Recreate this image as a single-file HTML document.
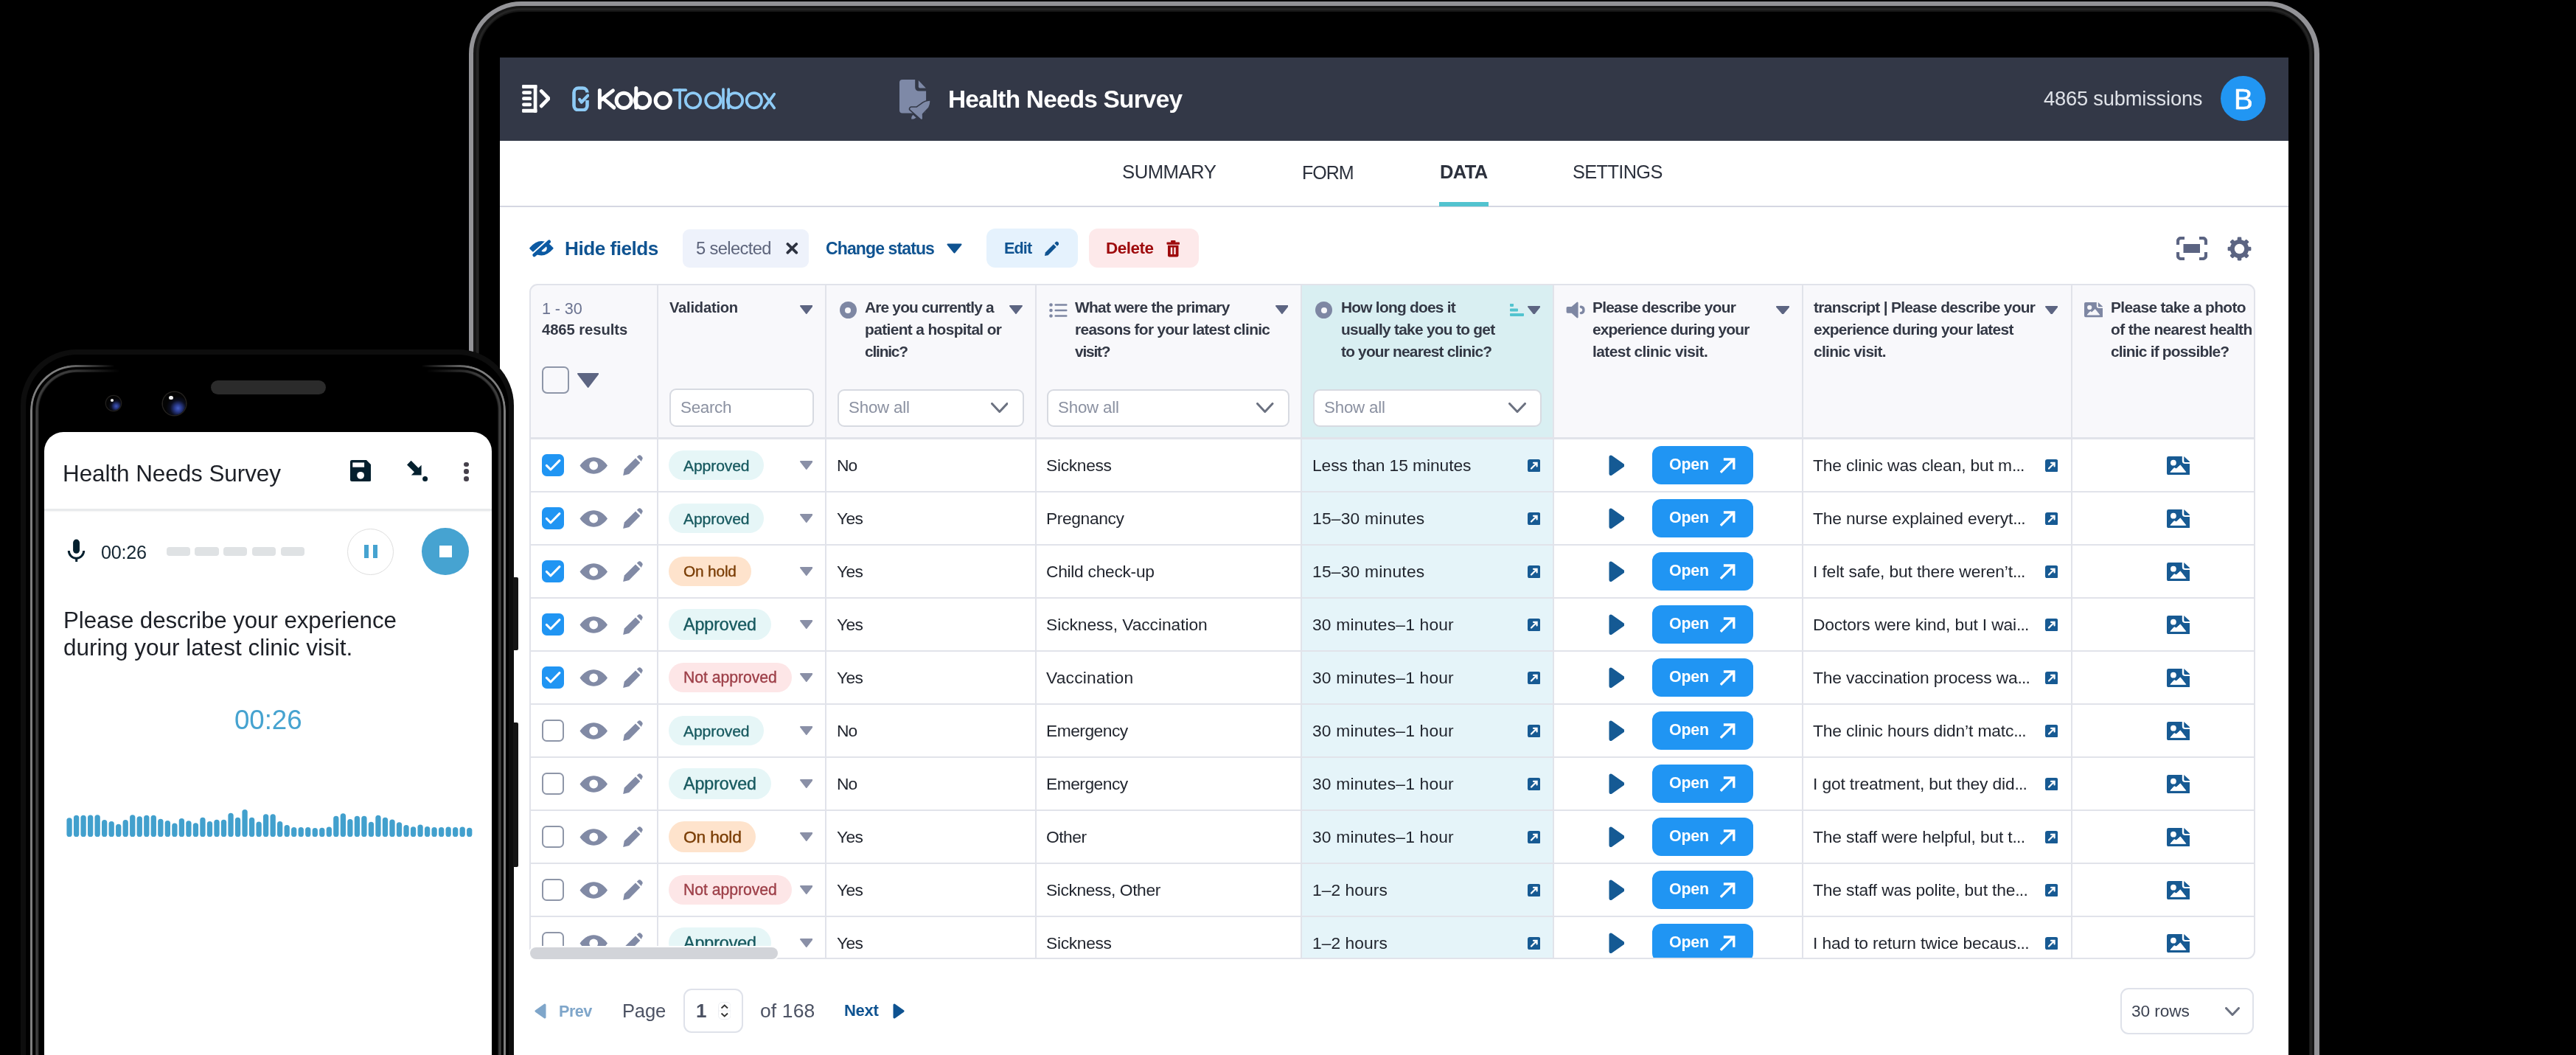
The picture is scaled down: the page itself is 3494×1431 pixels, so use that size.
<!DOCTYPE html><html><head><meta charset="utf-8"><style>html,body{margin:0;padding:0;width:3494px;height:1431px;overflow:hidden;background:#000;}body{position:relative;font-family:'Liberation Sans', sans-serif;} .t{will-change:transform;}</style></head><body><div style="position:absolute;left:635.8px;top:1.6px;width:2510px;height:1600px;border-radius:71px;background:#939397;"></div><div style="position:absolute;left:642.4px;top:8px;width:2496.8px;height:1600px;border-radius:64.5px;background:#161616;"></div><div style="position:absolute;left:645.5px;top:11px;width:2490.6px;height:1600px;border-radius:61.5px;border:3px solid #242424;box-sizing:border-box;"></div><div style="position:absolute;left:650px;top:15.5px;width:2481.6px;height:1600px;border-radius:57px;background:#000;"></div><div style="position:absolute;left:678.00px;top:77.50px;width:2425.50px;height:1353.50px;background:#fff;"></div><div style="position:absolute;left:678.00px;top:77.50px;width:2425.50px;height:113.00px;background:#333847;"></div><svg style="position:absolute;left:707.00px;top:114.00px;" width="39.00" height="39.00" viewBox="0 0 39 39" preserveAspectRatio="none"><g fill="#fff"><rect x="1.1" y="0.9" width="20.3" height="5" rx="1.2"/><rect x="16.7" y="0.9" width="4.7" height="37.8" rx="1"/><rect x="1.1" y="33.8" width="20.3" height="5" rx="1.2"/><rect x="1.1" y="9.2" width="13" height="4.8" rx="2.2"/><rect x="1.1" y="17.3" width="13" height="4.8" rx="2.2"/><rect x="1.1" y="25.4" width="13" height="4.8" rx="2.2"/></g><polyline points="27.3,9.6 37.2,19.7 27.3,29.8" fill="none" stroke="#fff" stroke-width="4.9" stroke-linecap="round" stroke-linejoin="miter"/></svg><svg style="position:absolute;left:776.00px;top:116.50px;" width="23.00" height="34.80" viewBox="0 0 23 34.8" preserveAspectRatio="none"><path d="M20.5 8.3 V8.5 A6 6 0 0 0 14.5 2.5 H8.5 A6 6 0 0 0 2.5 8.5 V26.3 A6 6 0 0 0 8.5 32.3 H14.5 A6 6 0 0 0 20.5 26.3 V19.1" fill="none" stroke="#8ecbf6" stroke-width="4.6"/><polyline points="10.2,17.9 12.6,21.7 21.3,12.6" fill="none" stroke="#8ecbf6" stroke-width="4.2" stroke-linecap="round" stroke-linejoin="round"/></svg><svg style="position:absolute;left:800.00px;top:105.00px;" width="260.00" height="55.00" viewBox="0 0 260 55" preserveAspectRatio="none"><g fill="none" stroke="#fff" stroke-width="5" stroke-linecap="round"><line x1="13.4" y1="17.4" x2="13.4" y2="41"/><line x1="15.6" y1="30.2" x2="31.4" y2="17.9"/><line x1="19.2" y1="29.3" x2="32.8" y2="41"/><circle cx="46.2" cy="31.3" r="10.1"/><line x1="62.8" y1="14.6" x2="62.8" y2="41"/><circle cx="71.6" cy="31.3" r="10.1"/><circle cx="99.2" cy="31.3" r="10.1"/></g><g fill="none" stroke="#8ecbf6" stroke-width="3.7" stroke-linecap="round"><line x1="114" y1="17.2" x2="130.2" y2="17.2"/><line x1="122.1" y1="17.2" x2="122.1" y2="41.4"/><circle cx="140" cy="31.3" r="10.2"/><circle cx="167.3" cy="31.3" r="10.2"/><line x1="181" y1="16" x2="181" y2="41.4"/><line x1="188.2" y1="16" x2="188.2" y2="41.4"/><circle cx="197" cy="31.3" r="10.2"/><circle cx="222.8" cy="31.3" r="10.2"/><line x1="236.5" y1="22.6" x2="250.2" y2="41.4"/><line x1="250.2" y1="22.6" x2="236.5" y2="41.4"/></g></svg><svg style="position:absolute;left:1210.00px;top:100.00px;" width="60.00" height="70.00" viewBox="0 0 60 70" preserveAspectRatio="none"><path d="M14 8 H31.2 V18.6 A5 5 0 0 0 36.2 23.6 H46.1 V49.4 A4 4 0 0 1 42.1 53.4 H14 A4 4 0 0 1 10 49.4 V12 A4 4 0 0 1 14 8Z" fill="#7e89a7"/><path d="M35.8 9 L45.8 19.6 H37.8 A2 2 0 0 1 35.8 17.6Z" fill="#7e89a7"/><path d="M51.3 36.8 C47 37 43 38.5 39.5 41.5 L33.5 45.8 H26.5 A2 2 0 0 0 24.3 48.3 L39.5 61.8 A1.2 1.2 0 0 0 41 60.8 L40.8 54.4 L49.1 45.8 C50.5 43 51.3 40 51.3 36.8Z" fill="#7e89a7" stroke="#333847" stroke-width="3.2" stroke-linejoin="round" paint-order="stroke"/><path d="M26.2 61.5 C26 59.5 26.5 57.5 28.3 55.7 L32.6 59.5 C31 61 28.8 61.8 26.2 61.5Z" fill="#7e89a7"/></svg><div class="t" style="position:absolute;left:1286.00px;top:117.75px;font-size:33.38px;line-height:33.38px;font-weight:700;color:#ffffff;white-space:nowrap;letter-spacing:-0.781px;">Health Needs Survey</div><div class="t" style="position:absolute;left:2771.50px;top:120.48px;font-size:27.31px;line-height:27.31px;font-weight:400;color:#dfe2e8;white-space:nowrap;letter-spacing:-0.199px;">4865 submissions</div><div style="position:absolute;left:3012px;top:103.2px;width:61px;height:61px;border-radius:50%;background:#2196f3;"></div><div class="t" style="position:absolute;left:3029.50px;top:115.80px;font-size:38.62px;line-height:38.62px;font-weight:400;color:#ffffff;white-space:nowrap;-webkit-text-stroke:0.6px #fff;">B</div><div class="t" style="position:absolute;left:1521.70px;top:220.87px;font-size:25.78px;line-height:25.78px;font-weight:400;color:#2c313d;white-space:nowrap;letter-spacing:-0.556px;">SUMMARY</div><div class="t" style="position:absolute;left:1765.50px;top:221.52px;font-size:25.02px;line-height:25.02px;font-weight:400;color:#2c313d;white-space:nowrap;letter-spacing:-1.048px;">FORM</div><div class="t" style="position:absolute;left:1952.80px;top:221.06px;font-size:25.57px;line-height:25.57px;font-weight:700;color:#2c313d;white-space:nowrap;letter-spacing:-0.675px;">DATA</div><div class="t" style="position:absolute;left:2133.00px;top:221.24px;font-size:25.35px;line-height:25.35px;font-weight:400;color:#2c313d;white-space:nowrap;letter-spacing:-0.636px;">SETTINGS</div><div style="position:absolute;left:678.00px;top:279.20px;width:2425.50px;height:2.00px;background:#d5d7e2;"></div><div style="position:absolute;left:1952.00px;top:273.80px;width:67.00px;height:6.20px;background:#52c3cf;"></div><svg style="position:absolute;left:712.00px;top:318.00px;" width="45.00" height="36.00" viewBox="0 0 45 36" preserveAspectRatio="none"><path d="M7.3 18.8 Q22.4 1.6 37.5 18.8 Q22.4 36 7.3 18.8Z" fill="#0c5aa3" stroke="#0c5aa3" stroke-width="2.2" stroke-linejoin="round"/><circle cx="25.2" cy="19" r="4.6" fill="#fff"/><line x1="11.3" y1="26.8" x2="31.5" y2="8.5" stroke="#fff" stroke-width="5" stroke-linecap="round"/><line x1="12.6" y1="28" x2="32.8" y2="9.7" stroke="#0c5aa3" stroke-width="4.6" stroke-linecap="round"/><path d="M15 27 L22 21" stroke="#0c5aa3" stroke-width="3"/></svg><div class="t" style="position:absolute;left:765.80px;top:324.35px;font-size:26.16px;line-height:26.16px;font-weight:700;color:#0f5391;white-space:nowrap;letter-spacing:-0.500px;">Hide fields</div><div style="position:absolute;left:926.40px;top:311.20px;width:170.30px;height:51.40px;background:#eef2fb;border-radius:9px;"></div><div class="t" style="position:absolute;left:944.00px;top:325.63px;font-size:23.71px;line-height:23.71px;font-weight:400;color:#5d647b;white-space:nowrap;letter-spacing:-0.623px;">5 selected</div><svg style="position:absolute;left:1066.00px;top:329.00px;" width="17.00" height="16.00" viewBox="0 0 17 16" preserveAspectRatio="none"><path d="M2.4 2 L14.2 13.7 M14.2 2 L2.4 13.7" stroke="#2d3240" stroke-width="3.8" stroke-linecap="round"/></svg><div class="t" style="position:absolute;left:1120.40px;top:326.18px;font-size:23.06px;line-height:23.06px;font-weight:700;color:#0f5391;white-space:nowrap;letter-spacing:-0.909px;">Change status</div><svg style="position:absolute;left:1284.00px;top:330.00px;" width="21.00" height="14.00" viewBox="0 0 21 14" preserveAspectRatio="none"><path d="M1.5 1.5 H19.5 L10.5 12.5Z" fill="#0f5391" stroke="#0f5391" stroke-width="2" stroke-linejoin="round"/></svg><div style="position:absolute;left:1338.00px;top:310.20px;width:123.50px;height:52.80px;background:#e5f2fd;border-radius:12px;"></div><div class="t" style="position:absolute;left:1361.80px;top:326.46px;font-size:21.55px;line-height:21.55px;font-weight:700;color:#0f5391;white-space:nowrap;letter-spacing:-0.832px;">Edit</div><svg style="position:absolute;left:1416.00px;top:326.50px;" width="20.00" height="21.00" viewBox="0 0 20 21" preserveAspectRatio="none"><path d="M1 20 L1.8 15.5 L13 4.3 L16.7 8 L5.5 19.2 Z" fill="#0f5391"/><path d="M14.3 3 L16 1.3 A2 2 0 0 1 18.8 1.3 L19.7 2.2 A2 2 0 0 1 19.7 5 L18 6.7Z" fill="#0f5391"/></svg><div style="position:absolute;left:1476.70px;top:310.20px;width:149.80px;height:52.80px;background:#fde9ea;border-radius:12px;"></div><div class="t" style="position:absolute;left:1500.30px;top:325.68px;font-size:22.47px;line-height:22.47px;font-weight:700;color:#9e0a0c;white-space:nowrap;letter-spacing:-0.493px;">Delete</div><svg style="position:absolute;left:1581.50px;top:326.00px;" width="18.50" height="22.50" viewBox="0 0 18.5 22.5" preserveAspectRatio="none"><rect x="0.5" y="2.5" width="17.5" height="3.2" rx="0.8" fill="#9e0a0c"/><rect x="6" y="0" width="6.5" height="3" rx="1" fill="#9e0a0c"/><path d="M2 6.8 H16.5 V20.5 A2 2 0 0 1 14.5 22.5 H4 A2 2 0 0 1 2 20.5Z" fill="#9e0a0c"/><rect x="5.8" y="9.5" width="2.4" height="9.5" fill="#fde9ea"/><rect x="10.3" y="9.5" width="2.4" height="9.5" fill="#fde9ea"/></svg><svg style="position:absolute;left:2951.50px;top:321.00px;" width="42.00" height="32.00" viewBox="0 0 42 32" preserveAspectRatio="none"><path d="M11 2 H6 A4 4 0 0 0 2 6 V11 M31 2 H36 A4 4 0 0 1 40 6 V11 M40 21 V26 A4 4 0 0 1 36 30 H31 M11 30 H6 A4 4 0 0 1 2 26 V21" fill="none" stroke="#5b6482" stroke-width="4.2"/><rect x="9.5" y="10" width="22.5" height="12" fill="#5b6482"/></svg><svg style="position:absolute;left:3020.50px;top:320.50px;" width="33.00" height="33.00" viewBox="0 0 33 33" preserveAspectRatio="none"><g fill="#5b6482"><circle cx="16.5" cy="16.5" r="12.6"/><rect x="13.7" y="0.6" width="5.6" height="6" rx="1.3" transform="rotate(0 16.5 16.5)"/><rect x="13.7" y="0.6" width="5.6" height="6" rx="1.3" transform="rotate(45 16.5 16.5)"/><rect x="13.7" y="0.6" width="5.6" height="6" rx="1.3" transform="rotate(90 16.5 16.5)"/><rect x="13.7" y="0.6" width="5.6" height="6" rx="1.3" transform="rotate(135 16.5 16.5)"/><rect x="13.7" y="0.6" width="5.6" height="6" rx="1.3" transform="rotate(180 16.5 16.5)"/><rect x="13.7" y="0.6" width="5.6" height="6" rx="1.3" transform="rotate(225 16.5 16.5)"/><rect x="13.7" y="0.6" width="5.6" height="6" rx="1.3" transform="rotate(270 16.5 16.5)"/><rect x="13.7" y="0.6" width="5.6" height="6" rx="1.3" transform="rotate(315 16.5 16.5)"/></g><circle cx="16.5" cy="16.5" r="6.7" fill="#fdfdfe"/></svg><div style="position:absolute;left:719px;top:386px;width:2339px;height:913.5px;border-radius:10px;overflow:hidden;background:#fff;"><div style="position:absolute;left:0.00px;top:0.00px;width:2339.00px;height:209.00px;background:#f8f8fb;"></div><div style="position:absolute;left:1045.50px;top:0.00px;width:342.50px;height:209.00px;background:#d9eff2;"></div><div style="position:absolute;left:1045.50px;top:209.00px;width:342.50px;height:704.50px;background:#e5f4f9;"></div><div style="position:absolute;left:0.00px;top:280.30px;width:2339.00px;height:2.00px;background:#e1e3ea;"></div><div style="position:absolute;left:0.00px;top:352.30px;width:2339.00px;height:2.00px;background:#e1e3ea;"></div><div style="position:absolute;left:0.00px;top:424.30px;width:2339.00px;height:2.00px;background:#e1e3ea;"></div><div style="position:absolute;left:0.00px;top:496.30px;width:2339.00px;height:2.00px;background:#e1e3ea;"></div><div style="position:absolute;left:0.00px;top:568.30px;width:2339.00px;height:2.00px;background:#e1e3ea;"></div><div style="position:absolute;left:0.00px;top:640.30px;width:2339.00px;height:2.00px;background:#e1e3ea;"></div><div style="position:absolute;left:0.00px;top:712.30px;width:2339.00px;height:2.00px;background:#e1e3ea;"></div><div style="position:absolute;left:0.00px;top:784.30px;width:2339.00px;height:2.00px;background:#e1e3ea;"></div><div style="position:absolute;left:0.00px;top:856.30px;width:2339.00px;height:2.00px;background:#e1e3ea;"></div><div style="position:absolute;left:0.00px;top:207.20px;width:2339.00px;height:2.60px;background:#e1e3ea;"></div><div style="position:absolute;left:172.00px;top:0.00px;width:2.00px;height:913.50px;background:#e1e3ea;"></div><div style="position:absolute;left:400.00px;top:0.00px;width:2.00px;height:913.50px;background:#e1e3ea;"></div><div style="position:absolute;left:684.50px;top:0.00px;width:2.00px;height:913.50px;background:#e1e3ea;"></div><div style="position:absolute;left:1044.50px;top:0.00px;width:2.00px;height:913.50px;background:#e1e3ea;"></div><div style="position:absolute;left:1387.00px;top:0.00px;width:2.00px;height:913.50px;background:#e1e3ea;"></div><div style="position:absolute;left:1724.50px;top:0.00px;width:2.00px;height:913.50px;background:#e1e3ea;"></div><div style="position:absolute;left:2089.50px;top:0.00px;width:2.00px;height:913.50px;background:#e1e3ea;"></div></div><div style="position:absolute;left:718px;top:385px;width:2341px;height:915.5px;border-radius:11px;border:2px solid #e1e3ea;box-sizing:border-box;"></div><div class="t" style="position:absolute;left:735.00px;top:407.61px;font-size:21.60px;line-height:21.60px;font-weight:400;color:#6b7390;white-space:nowrap;letter-spacing:-0.110px;">1 - 30</div><div class="t" style="position:absolute;left:735.00px;top:437.37px;font-size:20.24px;line-height:20.24px;font-weight:700;color:#333845;white-space:nowrap;letter-spacing:-0.074px;">4865 results</div><div style="position:absolute;left:734.60px;top:496.80px;width:37.40px;height:37.10px;border:2.2px solid #8e96a8;border-radius:7px;box-sizing:border-box;"></div><svg style="position:absolute;left:782.50px;top:505.50px;" width="29.30" height="20.00" viewBox="0 0 29.30 20.00" preserveAspectRatio="none"><path d="M1 1 H28.30 L14.65 19.00Z" fill="#5d6582" stroke="#5d6582" stroke-width="2" stroke-linejoin="round"/></svg><div class="t" style="position:absolute;left:907.70px;top:407.32px;font-size:20.18px;line-height:20.18px;font-weight:700;color:#333845;white-space:nowrap;letter-spacing:-0.233px;">Validation</div><svg style="position:absolute;left:1084.60px;top:414.20px;" width="17.60" height="12.00" viewBox="0 0 17.60 12.00" preserveAspectRatio="none"><path d="M1 1 H16.60 L8.80 11.00Z" fill="#5d6582" stroke="#5d6582" stroke-width="2" stroke-linejoin="round"/></svg><div style="position:absolute;left:907.70px;top:527.00px;width:196.50px;height:52.20px;background:#fff;border:2px solid #d7dae1;border-radius:9px;box-sizing:border-box;"></div><div class="t" style="position:absolute;left:922.70px;top:542.38px;font-size:22.47px;line-height:22.47px;font-weight:400;color:#8b91a1;white-space:nowrap;letter-spacing:-0.338px;">Search</div><div style="position:absolute;left:1138.6px;top:409.4px;width:23px;height:23px;border-radius:50%;background:#7e87a3;"></div><div style="position:absolute;left:1146.1px;top:416.9px;width:8px;height:8px;border-radius:50%;background:#f7f7fa;"></div><div class="t" style="position:absolute;left:1173.20px;top:407.01px;font-size:20.90px;line-height:20.90px;font-weight:700;color:#333845;white-space:nowrap;letter-spacing:-0.823px;">Are you currently a</div><div class="t" style="position:absolute;left:1173.20px;top:437.01px;font-size:20.90px;line-height:20.90px;font-weight:700;color:#333845;white-space:nowrap;letter-spacing:-0.624px;">patient a hospital or</div><div class="t" style="position:absolute;left:1173.20px;top:467.01px;font-size:20.90px;line-height:20.90px;font-weight:700;color:#333845;white-space:nowrap;letter-spacing:-1.195px;">clinic?</div><svg style="position:absolute;left:1369.20px;top:414.40px;" width="18.00" height="12.00" viewBox="0 0 18.00 12.00" preserveAspectRatio="none"><path d="M1 1 H17.00 L9.00 11.00Z" fill="#5d6582" stroke="#5d6582" stroke-width="2" stroke-linejoin="round"/></svg><div style="position:absolute;left:1135.50px;top:527.50px;width:253.30px;height:51.50px;background:#fff;border:2px solid #d7dae1;border-radius:9px;box-sizing:border-box;"></div><div class="t" style="position:absolute;left:1150.80px;top:541.90px;font-size:22.32px;line-height:22.32px;font-weight:400;color:#8b91a1;white-space:nowrap;letter-spacing:-0.197px;">Show all</div><svg style="position:absolute;left:1343.50px;top:546.00px;" width="23.50" height="14.00" viewBox="0 0 23.50 14.00" preserveAspectRatio="none"><polyline points="1.5,1.5 11.75,12.50 22.00,1.5" fill="none" stroke="#6b7180" stroke-width="3" stroke-linecap="round" stroke-linejoin="round"/></svg><svg style="position:absolute;left:1422.50px;top:410.50px;" width="25.00" height="20.00" viewBox="0 0 25 20" preserveAspectRatio="none"><g fill="#7e87a3"><circle cx="2.5" cy="2.5" r="2.3"/><circle cx="2.5" cy="10" r="2.3"/><circle cx="2.5" cy="17.5" r="2.3"/><rect x="7.5" y="1.2" width="17" height="2.6" rx="1"/><rect x="7.5" y="8.7" width="17" height="2.6" rx="1"/><rect x="7.5" y="16.2" width="17" height="2.6" rx="1"/></g></svg><div class="t" style="position:absolute;left:1458.00px;top:407.01px;font-size:20.90px;line-height:20.90px;font-weight:700;color:#333845;white-space:nowrap;letter-spacing:-0.683px;">What were the primary</div><div class="t" style="position:absolute;left:1458.00px;top:437.01px;font-size:20.90px;line-height:20.90px;font-weight:700;color:#333845;white-space:nowrap;letter-spacing:-0.671px;">reasons for your latest clinic</div><div class="t" style="position:absolute;left:1458.00px;top:467.01px;font-size:20.90px;line-height:20.90px;font-weight:700;color:#333845;white-space:nowrap;letter-spacing:-1.196px;">visit?</div><svg style="position:absolute;left:1729.60px;top:414.40px;" width="17.80" height="12.00" viewBox="0 0 17.80 12.00" preserveAspectRatio="none"><path d="M1 1 H16.80 L8.90 11.00Z" fill="#5d6582" stroke="#5d6582" stroke-width="2" stroke-linejoin="round"/></svg><div style="position:absolute;left:1420.30px;top:527.50px;width:329.00px;height:51.50px;background:#fff;border:2px solid #d7dae1;border-radius:9px;box-sizing:border-box;"></div><div class="t" style="position:absolute;left:1435.00px;top:541.90px;font-size:22.32px;line-height:22.32px;font-weight:400;color:#8b91a1;white-space:nowrap;letter-spacing:-0.197px;">Show all</div><svg style="position:absolute;left:1704.00px;top:546.00px;" width="23.50" height="14.00" viewBox="0 0 23.50 14.00" preserveAspectRatio="none"><polyline points="1.5,1.5 11.75,12.50 22.00,1.5" fill="none" stroke="#6b7180" stroke-width="3" stroke-linecap="round" stroke-linejoin="round"/></svg><div style="position:absolute;left:1784px;top:409.3px;width:23px;height:23px;border-radius:50%;background:#7e87a3;"></div><div style="position:absolute;left:1791.5px;top:416.8px;width:8px;height:8px;border-radius:50%;background:#f7f7fa;"></div><div class="t" style="position:absolute;left:1818.75px;top:407.01px;font-size:20.90px;line-height:20.90px;font-weight:700;color:#333845;white-space:nowrap;letter-spacing:-0.762px;">How long does it</div><div class="t" style="position:absolute;left:1818.75px;top:437.01px;font-size:20.90px;line-height:20.90px;font-weight:700;color:#333845;white-space:nowrap;letter-spacing:-0.728px;">usually take you to get</div><div class="t" style="position:absolute;left:1818.75px;top:467.01px;font-size:20.90px;line-height:20.90px;font-weight:700;color:#333845;white-space:nowrap;letter-spacing:-0.814px;">to your nearest clinic?</div><svg style="position:absolute;left:2047.50px;top:412.00px;" width="20.00" height="17.50" viewBox="0 0 20 17.5" preserveAspectRatio="none"><g fill="#52c4cf"><rect x="0" y="-0.1" width="5" height="4" rx="0.8"/><rect x="0" y="6.4" width="11" height="4" rx="0.8"/><rect x="0" y="12.9" width="19" height="4" rx="0.8"/></g></svg><svg style="position:absolute;left:2071.80px;top:414.60px;" width="17.40" height="11.60" viewBox="0 0 17.40 11.60" preserveAspectRatio="none"><path d="M1 1 H16.40 L8.70 10.60Z" fill="#5d6582" stroke="#5d6582" stroke-width="2" stroke-linejoin="round"/></svg><div style="position:absolute;left:1781.25px;top:527.60px;width:309.75px;height:51.40px;background:#fff;border:2px solid #d7dae1;border-radius:9px;box-sizing:border-box;"></div><div class="t" style="position:absolute;left:1796.00px;top:541.90px;font-size:22.32px;line-height:22.32px;font-weight:400;color:#8b91a1;white-space:nowrap;letter-spacing:-0.197px;">Show all</div><svg style="position:absolute;left:2045.50px;top:546.00px;" width="24.00" height="14.00" viewBox="0 0 24.00 14.00" preserveAspectRatio="none"><polyline points="1.5,1.5 12.00,12.50 22.50,1.5" fill="none" stroke="#6b7180" stroke-width="3" stroke-linecap="round" stroke-linejoin="round"/></svg><svg style="position:absolute;left:2123.50px;top:409.00px;" width="27.50" height="23.00" viewBox="0 0 27.5 23" preserveAspectRatio="none"><path d="M2.2 7 H7.6 L14.6 0.9 A1.2 1.2 0 0 1 16.6 1.8 V21.2 A1.2 1.2 0 0 1 14.6 22.1 L7.6 15.7 H2.2 A1.6 1.6 0 0 1 0.6 14.1 V8.6 A1.6 1.6 0 0 1 2.2 7Z" fill="#7e87a3"/><path d="M20.4 7.3 A4.2 4.2 0 0 1 20.4 15.6" fill="none" stroke="#7e87a3" stroke-width="3.4" stroke-linecap="round"/></svg><div class="t" style="position:absolute;left:2160.30px;top:407.01px;font-size:20.90px;line-height:20.90px;font-weight:700;color:#333845;white-space:nowrap;letter-spacing:-0.749px;">Please describe your</div><div class="t" style="position:absolute;left:2160.30px;top:437.01px;font-size:20.90px;line-height:20.90px;font-weight:700;color:#333845;white-space:nowrap;letter-spacing:-0.844px;">experience during your</div><div class="t" style="position:absolute;left:2160.30px;top:467.01px;font-size:20.90px;line-height:20.90px;font-weight:700;color:#333845;white-space:nowrap;letter-spacing:-0.548px;">latest clinic visit.</div><svg style="position:absolute;left:2408.80px;top:414.60px;" width="18.40" height="11.60" viewBox="0 0 18.40 11.60" preserveAspectRatio="none"><path d="M1 1 H17.40 L9.20 10.60Z" fill="#5d6582" stroke="#5d6582" stroke-width="2" stroke-linejoin="round"/></svg><div class="t" style="position:absolute;left:2460.40px;top:407.01px;font-size:20.90px;line-height:20.90px;font-weight:700;color:#333845;white-space:nowrap;letter-spacing:-0.682px;">transcript | Please describe your</div><div class="t" style="position:absolute;left:2460.40px;top:437.01px;font-size:20.90px;line-height:20.90px;font-weight:700;color:#333845;white-space:nowrap;letter-spacing:-0.715px;">experience during your latest</div><div class="t" style="position:absolute;left:2460.40px;top:467.01px;font-size:20.90px;line-height:20.90px;font-weight:700;color:#333845;white-space:nowrap;letter-spacing:-0.694px;">clinic visit.</div><svg style="position:absolute;left:2773.80px;top:414.60px;" width="17.40" height="11.60" viewBox="0 0 17.40 11.60" preserveAspectRatio="none"><path d="M1 1 H16.40 L8.70 10.60Z" fill="#5d6582" stroke="#5d6582" stroke-width="2" stroke-linejoin="round"/></svg><svg style="position:absolute;left:2826.80px;top:410.40px;" width="25.60" height="20.30" viewBox="0 0 32 25.5" preserveAspectRatio="none"><path d="M2.5 0 H21 V6 A4 4 0 0 0 25 10 H32 V23 A2.5 2.5 0 0 1 29.5 25.5 H2.5 A2.5 2.5 0 0 1 0 23 V2.5 A2.5 2.5 0 0 1 2.5 0Z" fill="#7e87a3"/><path d="M23.5 0 L32 8 H25 A1.5 1.5 0 0 1 23.5 6.5Z" fill="#7e87a3"/><circle cx="9" cy="8.8" r="3.9" fill="#f7f7fa"/><path d="M5 21.5 L10 15.8 L13 17 L18.5 12 L26 21.5Z" fill="#f7f7fa" stroke="#f7f7fa" stroke-width="1" stroke-linejoin="round"/></svg><div class="t" style="position:absolute;left:2863.00px;top:407.01px;font-size:20.90px;line-height:20.90px;font-weight:700;color:#333845;white-space:nowrap;letter-spacing:-0.642px;">Please take a photo</div><div class="t" style="position:absolute;left:2863.00px;top:437.01px;font-size:20.90px;line-height:20.90px;font-weight:700;color:#333845;white-space:nowrap;letter-spacing:-0.606px;">of the nearest health</div><div class="t" style="position:absolute;left:2863.00px;top:467.01px;font-size:20.90px;line-height:20.90px;font-weight:700;color:#333845;white-space:nowrap;letter-spacing:-0.794px;">clinic if possible?</div><div style="position:absolute;left:0;top:0;width:3494px;height:1298.5px;overflow:hidden;"><div style="position:absolute;left:734.60px;top:616.30px;width:30.20px;height:30.00px;background:#2095f3;border-radius:6.5px;"></div><svg style="position:absolute;left:734.60px;top:616.30px;" width="30.20" height="30.00" viewBox="0 0 30 30" preserveAspectRatio="none"><polyline points="6.3,15.4 11.8,21 23.8,8.6" fill="none" stroke="#fff" stroke-width="3" stroke-linecap="round" stroke-linejoin="round"/></svg><svg style="position:absolute;left:785.50px;top:619.80px;" width="38.50" height="23.00" viewBox="0 0 38.5 23" preserveAspectRatio="none"><path d="M0.5 11.5 C6 4 12.5 0.3 19.25 0.3 C26 0.3 32.5 4 38 11.5 C32.5 19 26 22.7 19.25 22.7 C12.5 22.7 6 19 0.5 11.5Z" fill="#818aa5"/><circle cx="19.2" cy="11.5" r="5.9" fill="#fff"/></svg><svg style="position:absolute;left:845.00px;top:616.80px;" width="27.50" height="29.00" viewBox="0 0 27.5 29" preserveAspectRatio="none"><path d="M0.2 28 L1.8 19.6 L17 4.5 L23.3 10.8 L8.2 26 Z" fill="#818aa5"/><path d="M18.8 2.8 L20.2 1.4 A3.3 3.3 0 0 1 24.8 1.4 L25.6 2.2 A3.3 3.3 0 0 1 25.6 6.8 L25 9.1Z" fill="#818aa5"/></svg><div style="position:absolute;left:907.00px;top:611.30px;width:129.00px;height:40.00px;background:#e6f6f7;border-radius:20px;"></div><div class="t" style="position:absolute;left:926.90px;top:620.70px;font-size:21.14px;line-height:21.14px;font-weight:400;color:#17595f;white-space:nowrap;letter-spacing:-0.117px;-webkit-text-stroke:0.35px #17595f;">Approved</div><svg style="position:absolute;left:1084.60px;top:625.30px;" width="17.60" height="12.00" viewBox="0 0 17.60 12.00" preserveAspectRatio="none"><path d="M1 1 H16.60 L8.80 11.00Z" fill="#8a90a7" stroke="#8a90a7" stroke-width="2" stroke-linejoin="round"/></svg><div class="t" style="position:absolute;left:1134.50px;top:620.20px;font-size:22.80px;line-height:22.80px;font-weight:400;color:#22262f;white-space:nowrap;letter-spacing:-1.023px;">No</div><div class="t" style="position:absolute;left:1419.30px;top:620.20px;font-size:22.80px;line-height:22.80px;font-weight:400;color:#22262f;white-space:nowrap;letter-spacing:-0.319px;">Sickness</div><div class="t" style="position:absolute;left:1780.25px;top:620.20px;font-size:22.80px;line-height:22.80px;font-weight:400;color:#22262f;white-space:nowrap;letter-spacing:-0.064px;">Less than 15 minutes</div><svg style="position:absolute;left:2072.00px;top:622.60px;" width="17.40" height="17.40" viewBox="0 0 17.4 17.4" preserveAspectRatio="none"><rect x="0" y="0" width="17.4" height="17.4" rx="3" fill="#175a93"/><path d="M5 12.5 L11.5 6 M8 4.8 H12.6 V9.4" fill="none" stroke="#fff" stroke-width="2.2" stroke-linecap="round"/></svg><svg style="position:absolute;left:2181.50px;top:616.80px;" width="21.50" height="28.50" viewBox="0 0 21.5 28.5" preserveAspectRatio="none"><path d="M3 3 L19 14.25 L3 25.5Z" fill="#155a94" stroke="#155a94" stroke-width="5" stroke-linejoin="round"/></svg><div style="position:absolute;left:2241.30px;top:605.00px;width:137.00px;height:52.40px;background:#2095f3;border-radius:12px;"></div><div class="t" style="position:absolute;left:2263.60px;top:620.46px;font-size:21.43px;line-height:21.43px;font-weight:700;color:#ffffff;white-space:nowrap;letter-spacing:-0.261px;">Open</div><svg style="position:absolute;left:2332.50px;top:621.00px;" width="21.00" height="20.60" viewBox="0 0 21 20.6" preserveAspectRatio="none"><path d="M2 18.6 L18 2.6 M6.5 2 H18.8 V14.2" fill="none" stroke="#fff" stroke-width="3.3" stroke-linecap="square"/></svg><div class="t" style="position:absolute;left:2459.40px;top:620.20px;font-size:22.80px;line-height:22.80px;font-weight:400;color:#22262f;white-space:nowrap;letter-spacing:-0.141px;">The clinic was clean, but m<span style="letter-spacing:-0.8px">...</span></div><svg style="position:absolute;left:2773.70px;top:622.60px;" width="17.40" height="17.40" viewBox="0 0 17.4 17.4" preserveAspectRatio="none"><rect x="0" y="0" width="17.4" height="17.4" rx="3" fill="#175a93"/><path d="M5 12.5 L11.5 6 M8 4.8 H12.6 V9.4" fill="none" stroke="#fff" stroke-width="2.2" stroke-linecap="round"/></svg><svg style="position:absolute;left:2938.70px;top:618.50px;" width="31.70" height="25.30" viewBox="0 0 32 25.5" preserveAspectRatio="none"><path d="M2.5 0 H21 V6 A4 4 0 0 0 25 10 H32 V23 A2.5 2.5 0 0 1 29.5 25.5 H2.5 A2.5 2.5 0 0 1 0 23 V2.5 A2.5 2.5 0 0 1 2.5 0Z" fill="#175a93"/><path d="M23.5 0 L32 8 H25 A1.5 1.5 0 0 1 23.5 6.5Z" fill="#175a93"/><circle cx="9" cy="8.8" r="3.9" fill="#ffffff"/><path d="M5 21.5 L10 15.8 L13 17 L18.5 12 L26 21.5Z" fill="#ffffff" stroke="#ffffff" stroke-width="1" stroke-linejoin="round"/></svg><div style="position:absolute;left:734.60px;top:688.30px;width:30.20px;height:30.00px;background:#2095f3;border-radius:6.5px;"></div><svg style="position:absolute;left:734.60px;top:688.30px;" width="30.20" height="30.00" viewBox="0 0 30 30" preserveAspectRatio="none"><polyline points="6.3,15.4 11.8,21 23.8,8.6" fill="none" stroke="#fff" stroke-width="3" stroke-linecap="round" stroke-linejoin="round"/></svg><svg style="position:absolute;left:785.50px;top:691.80px;" width="38.50" height="23.00" viewBox="0 0 38.5 23" preserveAspectRatio="none"><path d="M0.5 11.5 C6 4 12.5 0.3 19.25 0.3 C26 0.3 32.5 4 38 11.5 C32.5 19 26 22.7 19.25 22.7 C12.5 22.7 6 19 0.5 11.5Z" fill="#818aa5"/><circle cx="19.2" cy="11.5" r="5.9" fill="#fff"/></svg><svg style="position:absolute;left:845.00px;top:688.80px;" width="27.50" height="29.00" viewBox="0 0 27.5 29" preserveAspectRatio="none"><path d="M0.2 28 L1.8 19.6 L17 4.5 L23.3 10.8 L8.2 26 Z" fill="#818aa5"/><path d="M18.8 2.8 L20.2 1.4 A3.3 3.3 0 0 1 24.8 1.4 L25.6 2.2 A3.3 3.3 0 0 1 25.6 6.8 L25 9.1Z" fill="#818aa5"/></svg><div style="position:absolute;left:907.00px;top:683.30px;width:129.00px;height:40.00px;background:#e6f6f7;border-radius:20px;"></div><div class="t" style="position:absolute;left:926.90px;top:692.70px;font-size:21.14px;line-height:21.14px;font-weight:400;color:#17595f;white-space:nowrap;letter-spacing:-0.117px;-webkit-text-stroke:0.35px #17595f;">Approved</div><svg style="position:absolute;left:1084.60px;top:697.30px;" width="17.60" height="12.00" viewBox="0 0 17.60 12.00" preserveAspectRatio="none"><path d="M1 1 H16.60 L8.80 11.00Z" fill="#8a90a7" stroke="#8a90a7" stroke-width="2" stroke-linejoin="round"/></svg><div class="t" style="position:absolute;left:1134.50px;top:692.20px;font-size:22.80px;line-height:22.80px;font-weight:400;color:#22262f;white-space:nowrap;letter-spacing:-0.653px;">Yes</div><div class="t" style="position:absolute;left:1419.30px;top:692.20px;font-size:22.80px;line-height:22.80px;font-weight:400;color:#22262f;white-space:nowrap;letter-spacing:-0.388px;">Pregnancy</div><div class="t" style="position:absolute;left:1780.25px;top:692.20px;font-size:22.80px;line-height:22.80px;font-weight:400;color:#22262f;white-space:nowrap;letter-spacing:0.220px;">15–30 minutes</div><svg style="position:absolute;left:2072.00px;top:694.60px;" width="17.40" height="17.40" viewBox="0 0 17.4 17.4" preserveAspectRatio="none"><rect x="0" y="0" width="17.4" height="17.4" rx="3" fill="#175a93"/><path d="M5 12.5 L11.5 6 M8 4.8 H12.6 V9.4" fill="none" stroke="#fff" stroke-width="2.2" stroke-linecap="round"/></svg><svg style="position:absolute;left:2181.50px;top:688.80px;" width="21.50" height="28.50" viewBox="0 0 21.5 28.5" preserveAspectRatio="none"><path d="M3 3 L19 14.25 L3 25.5Z" fill="#155a94" stroke="#155a94" stroke-width="5" stroke-linejoin="round"/></svg><div style="position:absolute;left:2241.30px;top:677.00px;width:137.00px;height:52.40px;background:#2095f3;border-radius:12px;"></div><div class="t" style="position:absolute;left:2263.60px;top:692.46px;font-size:21.43px;line-height:21.43px;font-weight:700;color:#ffffff;white-space:nowrap;letter-spacing:-0.261px;">Open</div><svg style="position:absolute;left:2332.50px;top:693.00px;" width="21.00" height="20.60" viewBox="0 0 21 20.6" preserveAspectRatio="none"><path d="M2 18.6 L18 2.6 M6.5 2 H18.8 V14.2" fill="none" stroke="#fff" stroke-width="3.3" stroke-linecap="square"/></svg><div class="t" style="position:absolute;left:2459.40px;top:692.20px;font-size:22.80px;line-height:22.80px;font-weight:400;color:#22262f;white-space:nowrap;letter-spacing:-0.144px;">The nurse explained everyt<span style="letter-spacing:-0.8px">...</span></div><svg style="position:absolute;left:2773.70px;top:694.60px;" width="17.40" height="17.40" viewBox="0 0 17.4 17.4" preserveAspectRatio="none"><rect x="0" y="0" width="17.4" height="17.4" rx="3" fill="#175a93"/><path d="M5 12.5 L11.5 6 M8 4.8 H12.6 V9.4" fill="none" stroke="#fff" stroke-width="2.2" stroke-linecap="round"/></svg><svg style="position:absolute;left:2938.70px;top:690.50px;" width="31.70" height="25.30" viewBox="0 0 32 25.5" preserveAspectRatio="none"><path d="M2.5 0 H21 V6 A4 4 0 0 0 25 10 H32 V23 A2.5 2.5 0 0 1 29.5 25.5 H2.5 A2.5 2.5 0 0 1 0 23 V2.5 A2.5 2.5 0 0 1 2.5 0Z" fill="#175a93"/><path d="M23.5 0 L32 8 H25 A1.5 1.5 0 0 1 23.5 6.5Z" fill="#175a93"/><circle cx="9" cy="8.8" r="3.9" fill="#ffffff"/><path d="M5 21.5 L10 15.8 L13 17 L18.5 12 L26 21.5Z" fill="#ffffff" stroke="#ffffff" stroke-width="1" stroke-linejoin="round"/></svg><div style="position:absolute;left:734.60px;top:760.30px;width:30.20px;height:30.00px;background:#2095f3;border-radius:6.5px;"></div><svg style="position:absolute;left:734.60px;top:760.30px;" width="30.20" height="30.00" viewBox="0 0 30 30" preserveAspectRatio="none"><polyline points="6.3,15.4 11.8,21 23.8,8.6" fill="none" stroke="#fff" stroke-width="3" stroke-linecap="round" stroke-linejoin="round"/></svg><svg style="position:absolute;left:785.50px;top:763.80px;" width="38.50" height="23.00" viewBox="0 0 38.5 23" preserveAspectRatio="none"><path d="M0.5 11.5 C6 4 12.5 0.3 19.25 0.3 C26 0.3 32.5 4 38 11.5 C32.5 19 26 22.7 19.25 22.7 C12.5 22.7 6 19 0.5 11.5Z" fill="#818aa5"/><circle cx="19.2" cy="11.5" r="5.9" fill="#fff"/></svg><svg style="position:absolute;left:845.00px;top:760.80px;" width="27.50" height="29.00" viewBox="0 0 27.5 29" preserveAspectRatio="none"><path d="M0.2 28 L1.8 19.6 L17 4.5 L23.3 10.8 L8.2 26 Z" fill="#818aa5"/><path d="M18.8 2.8 L20.2 1.4 A3.3 3.3 0 0 1 24.8 1.4 L25.6 2.2 A3.3 3.3 0 0 1 25.6 6.8 L25 9.1Z" fill="#818aa5"/></svg><div style="position:absolute;left:907.00px;top:755.30px;width:112.00px;height:40.00px;background:#fee3cc;border-radius:20px;"></div><div class="t" style="position:absolute;left:926.90px;top:764.92px;font-size:20.89px;line-height:20.89px;font-weight:400;color:#7a3d05;white-space:nowrap;letter-spacing:-0.193px;-webkit-text-stroke:0.35px #7a3d05;">On hold</div><svg style="position:absolute;left:1084.60px;top:769.30px;" width="17.60" height="12.00" viewBox="0 0 17.60 12.00" preserveAspectRatio="none"><path d="M1 1 H16.60 L8.80 11.00Z" fill="#8a90a7" stroke="#8a90a7" stroke-width="2" stroke-linejoin="round"/></svg><div class="t" style="position:absolute;left:1134.50px;top:764.20px;font-size:22.80px;line-height:22.80px;font-weight:400;color:#22262f;white-space:nowrap;letter-spacing:-0.653px;">Yes</div><div class="t" style="position:absolute;left:1419.30px;top:764.20px;font-size:22.80px;line-height:22.80px;font-weight:400;color:#22262f;white-space:nowrap;letter-spacing:-0.292px;">Child check-up</div><div class="t" style="position:absolute;left:1780.25px;top:764.20px;font-size:22.80px;line-height:22.80px;font-weight:400;color:#22262f;white-space:nowrap;letter-spacing:0.220px;">15–30 minutes</div><svg style="position:absolute;left:2072.00px;top:766.60px;" width="17.40" height="17.40" viewBox="0 0 17.4 17.4" preserveAspectRatio="none"><rect x="0" y="0" width="17.4" height="17.4" rx="3" fill="#175a93"/><path d="M5 12.5 L11.5 6 M8 4.8 H12.6 V9.4" fill="none" stroke="#fff" stroke-width="2.2" stroke-linecap="round"/></svg><svg style="position:absolute;left:2181.50px;top:760.80px;" width="21.50" height="28.50" viewBox="0 0 21.5 28.5" preserveAspectRatio="none"><path d="M3 3 L19 14.25 L3 25.5Z" fill="#155a94" stroke="#155a94" stroke-width="5" stroke-linejoin="round"/></svg><div style="position:absolute;left:2241.30px;top:749.00px;width:137.00px;height:52.40px;background:#2095f3;border-radius:12px;"></div><div class="t" style="position:absolute;left:2263.60px;top:764.46px;font-size:21.43px;line-height:21.43px;font-weight:700;color:#ffffff;white-space:nowrap;letter-spacing:-0.261px;">Open</div><svg style="position:absolute;left:2332.50px;top:765.00px;" width="21.00" height="20.60" viewBox="0 0 21 20.6" preserveAspectRatio="none"><path d="M2 18.6 L18 2.6 M6.5 2 H18.8 V14.2" fill="none" stroke="#fff" stroke-width="3.3" stroke-linecap="square"/></svg><div class="t" style="position:absolute;left:2459.40px;top:764.20px;font-size:22.80px;line-height:22.80px;font-weight:400;color:#22262f;white-space:nowrap;letter-spacing:-0.136px;">I felt safe, but there weren’t<span style="letter-spacing:-0.8px">...</span></div><svg style="position:absolute;left:2773.70px;top:766.60px;" width="17.40" height="17.40" viewBox="0 0 17.4 17.4" preserveAspectRatio="none"><rect x="0" y="0" width="17.4" height="17.4" rx="3" fill="#175a93"/><path d="M5 12.5 L11.5 6 M8 4.8 H12.6 V9.4" fill="none" stroke="#fff" stroke-width="2.2" stroke-linecap="round"/></svg><svg style="position:absolute;left:2938.70px;top:762.50px;" width="31.70" height="25.30" viewBox="0 0 32 25.5" preserveAspectRatio="none"><path d="M2.5 0 H21 V6 A4 4 0 0 0 25 10 H32 V23 A2.5 2.5 0 0 1 29.5 25.5 H2.5 A2.5 2.5 0 0 1 0 23 V2.5 A2.5 2.5 0 0 1 2.5 0Z" fill="#175a93"/><path d="M23.5 0 L32 8 H25 A1.5 1.5 0 0 1 23.5 6.5Z" fill="#175a93"/><circle cx="9" cy="8.8" r="3.9" fill="#ffffff"/><path d="M5 21.5 L10 15.8 L13 17 L18.5 12 L26 21.5Z" fill="#ffffff" stroke="#ffffff" stroke-width="1" stroke-linejoin="round"/></svg><div style="position:absolute;left:734.60px;top:832.30px;width:30.20px;height:30.00px;background:#2095f3;border-radius:6.5px;"></div><svg style="position:absolute;left:734.60px;top:832.30px;" width="30.20" height="30.00" viewBox="0 0 30 30" preserveAspectRatio="none"><polyline points="6.3,15.4 11.8,21 23.8,8.6" fill="none" stroke="#fff" stroke-width="3" stroke-linecap="round" stroke-linejoin="round"/></svg><svg style="position:absolute;left:785.50px;top:835.80px;" width="38.50" height="23.00" viewBox="0 0 38.5 23" preserveAspectRatio="none"><path d="M0.5 11.5 C6 4 12.5 0.3 19.25 0.3 C26 0.3 32.5 4 38 11.5 C32.5 19 26 22.7 19.25 22.7 C12.5 22.7 6 19 0.5 11.5Z" fill="#818aa5"/><circle cx="19.2" cy="11.5" r="5.9" fill="#fff"/></svg><svg style="position:absolute;left:845.00px;top:832.80px;" width="27.50" height="29.00" viewBox="0 0 27.5 29" preserveAspectRatio="none"><path d="M0.2 28 L1.8 19.6 L17 4.5 L23.3 10.8 L8.2 26 Z" fill="#818aa5"/><path d="M18.8 2.8 L20.2 1.4 A3.3 3.3 0 0 1 24.8 1.4 L25.6 2.2 A3.3 3.3 0 0 1 25.6 6.8 L25 9.1Z" fill="#818aa5"/></svg><div style="position:absolute;left:906.70px;top:826.30px;width:139.00px;height:42.00px;background:#e6f6f7;border-radius:21px;"></div><div class="t" style="position:absolute;left:926.70px;top:835.61px;font-size:23.26px;line-height:23.26px;font-weight:400;color:#17595f;white-space:nowrap;letter-spacing:-0.080px;-webkit-text-stroke:0.4px #17595f;">Approved</div><svg style="position:absolute;left:1084.60px;top:841.30px;" width="17.60" height="12.00" viewBox="0 0 17.60 12.00" preserveAspectRatio="none"><path d="M1 1 H16.60 L8.80 11.00Z" fill="#8a90a7" stroke="#8a90a7" stroke-width="2" stroke-linejoin="round"/></svg><div class="t" style="position:absolute;left:1134.50px;top:836.20px;font-size:22.80px;line-height:22.80px;font-weight:400;color:#22262f;white-space:nowrap;letter-spacing:-0.653px;">Yes</div><div class="t" style="position:absolute;left:1419.30px;top:836.20px;font-size:22.80px;line-height:22.80px;font-weight:400;color:#22262f;white-space:nowrap;letter-spacing:-0.068px;">Sickness, Vaccination</div><div class="t" style="position:absolute;left:1780.25px;top:836.20px;font-size:22.80px;line-height:22.80px;font-weight:400;color:#22262f;white-space:nowrap;letter-spacing:0.179px;">30 minutes–1 hour</div><svg style="position:absolute;left:2072.00px;top:838.60px;" width="17.40" height="17.40" viewBox="0 0 17.4 17.4" preserveAspectRatio="none"><rect x="0" y="0" width="17.4" height="17.4" rx="3" fill="#175a93"/><path d="M5 12.5 L11.5 6 M8 4.8 H12.6 V9.4" fill="none" stroke="#fff" stroke-width="2.2" stroke-linecap="round"/></svg><svg style="position:absolute;left:2181.50px;top:832.80px;" width="21.50" height="28.50" viewBox="0 0 21.5 28.5" preserveAspectRatio="none"><path d="M3 3 L19 14.25 L3 25.5Z" fill="#155a94" stroke="#155a94" stroke-width="5" stroke-linejoin="round"/></svg><div style="position:absolute;left:2241.30px;top:821.00px;width:137.00px;height:52.40px;background:#2095f3;border-radius:12px;"></div><div class="t" style="position:absolute;left:2263.60px;top:836.46px;font-size:21.43px;line-height:21.43px;font-weight:700;color:#ffffff;white-space:nowrap;letter-spacing:-0.261px;">Open</div><svg style="position:absolute;left:2332.50px;top:837.00px;" width="21.00" height="20.60" viewBox="0 0 21 20.6" preserveAspectRatio="none"><path d="M2 18.6 L18 2.6 M6.5 2 H18.8 V14.2" fill="none" stroke="#fff" stroke-width="3.3" stroke-linecap="square"/></svg><div class="t" style="position:absolute;left:2459.40px;top:836.20px;font-size:22.80px;line-height:22.80px;font-weight:400;color:#22262f;white-space:nowrap;letter-spacing:-0.143px;">Doctors were kind, but I wai<span style="letter-spacing:-0.8px">...</span></div><svg style="position:absolute;left:2773.70px;top:838.60px;" width="17.40" height="17.40" viewBox="0 0 17.4 17.4" preserveAspectRatio="none"><rect x="0" y="0" width="17.4" height="17.4" rx="3" fill="#175a93"/><path d="M5 12.5 L11.5 6 M8 4.8 H12.6 V9.4" fill="none" stroke="#fff" stroke-width="2.2" stroke-linecap="round"/></svg><svg style="position:absolute;left:2938.70px;top:834.50px;" width="31.70" height="25.30" viewBox="0 0 32 25.5" preserveAspectRatio="none"><path d="M2.5 0 H21 V6 A4 4 0 0 0 25 10 H32 V23 A2.5 2.5 0 0 1 29.5 25.5 H2.5 A2.5 2.5 0 0 1 0 23 V2.5 A2.5 2.5 0 0 1 2.5 0Z" fill="#175a93"/><path d="M23.5 0 L32 8 H25 A1.5 1.5 0 0 1 23.5 6.5Z" fill="#175a93"/><circle cx="9" cy="8.8" r="3.9" fill="#ffffff"/><path d="M5 21.5 L10 15.8 L13 17 L18.5 12 L26 21.5Z" fill="#ffffff" stroke="#ffffff" stroke-width="1" stroke-linejoin="round"/></svg><div style="position:absolute;left:734.60px;top:904.30px;width:30.20px;height:30.00px;background:#2095f3;border-radius:6.5px;"></div><svg style="position:absolute;left:734.60px;top:904.30px;" width="30.20" height="30.00" viewBox="0 0 30 30" preserveAspectRatio="none"><polyline points="6.3,15.4 11.8,21 23.8,8.6" fill="none" stroke="#fff" stroke-width="3" stroke-linecap="round" stroke-linejoin="round"/></svg><svg style="position:absolute;left:785.50px;top:907.80px;" width="38.50" height="23.00" viewBox="0 0 38.5 23" preserveAspectRatio="none"><path d="M0.5 11.5 C6 4 12.5 0.3 19.25 0.3 C26 0.3 32.5 4 38 11.5 C32.5 19 26 22.7 19.25 22.7 C12.5 22.7 6 19 0.5 11.5Z" fill="#818aa5"/><circle cx="19.2" cy="11.5" r="5.9" fill="#fff"/></svg><svg style="position:absolute;left:845.00px;top:904.80px;" width="27.50" height="29.00" viewBox="0 0 27.5 29" preserveAspectRatio="none"><path d="M0.2 28 L1.8 19.6 L17 4.5 L23.3 10.8 L8.2 26 Z" fill="#818aa5"/><path d="M18.8 2.8 L20.2 1.4 A3.3 3.3 0 0 1 24.8 1.4 L25.6 2.2 A3.3 3.3 0 0 1 25.6 6.8 L25 9.1Z" fill="#818aa5"/></svg><div style="position:absolute;left:907.00px;top:899.30px;width:167.00px;height:40.00px;background:#fde6e7;border-radius:20px;"></div><div class="t" style="position:absolute;left:926.90px;top:908.61px;font-size:21.25px;line-height:21.25px;font-weight:400;color:#9d3f48;white-space:nowrap;letter-spacing:-0.073px;-webkit-text-stroke:0.35px #9d3f48;">Not approved</div><svg style="position:absolute;left:1084.60px;top:913.30px;" width="17.60" height="12.00" viewBox="0 0 17.60 12.00" preserveAspectRatio="none"><path d="M1 1 H16.60 L8.80 11.00Z" fill="#8a90a7" stroke="#8a90a7" stroke-width="2" stroke-linejoin="round"/></svg><div class="t" style="position:absolute;left:1134.50px;top:908.20px;font-size:22.80px;line-height:22.80px;font-weight:400;color:#22262f;white-space:nowrap;letter-spacing:-0.653px;">Yes</div><div class="t" style="position:absolute;left:1419.30px;top:908.20px;font-size:22.80px;line-height:22.80px;font-weight:400;color:#22262f;white-space:nowrap;letter-spacing:0.193px;">Vaccination</div><div class="t" style="position:absolute;left:1780.25px;top:908.20px;font-size:22.80px;line-height:22.80px;font-weight:400;color:#22262f;white-space:nowrap;letter-spacing:0.179px;">30 minutes–1 hour</div><svg style="position:absolute;left:2072.00px;top:910.60px;" width="17.40" height="17.40" viewBox="0 0 17.4 17.4" preserveAspectRatio="none"><rect x="0" y="0" width="17.4" height="17.4" rx="3" fill="#175a93"/><path d="M5 12.5 L11.5 6 M8 4.8 H12.6 V9.4" fill="none" stroke="#fff" stroke-width="2.2" stroke-linecap="round"/></svg><svg style="position:absolute;left:2181.50px;top:904.80px;" width="21.50" height="28.50" viewBox="0 0 21.5 28.5" preserveAspectRatio="none"><path d="M3 3 L19 14.25 L3 25.5Z" fill="#155a94" stroke="#155a94" stroke-width="5" stroke-linejoin="round"/></svg><div style="position:absolute;left:2241.30px;top:893.00px;width:137.00px;height:52.40px;background:#2095f3;border-radius:12px;"></div><div class="t" style="position:absolute;left:2263.60px;top:908.46px;font-size:21.43px;line-height:21.43px;font-weight:700;color:#ffffff;white-space:nowrap;letter-spacing:-0.261px;">Open</div><svg style="position:absolute;left:2332.50px;top:909.00px;" width="21.00" height="20.60" viewBox="0 0 21 20.6" preserveAspectRatio="none"><path d="M2 18.6 L18 2.6 M6.5 2 H18.8 V14.2" fill="none" stroke="#fff" stroke-width="3.3" stroke-linecap="square"/></svg><div class="t" style="position:absolute;left:2459.40px;top:908.20px;font-size:22.80px;line-height:22.80px;font-weight:400;color:#22262f;white-space:nowrap;letter-spacing:-0.147px;">The vaccination process wa<span style="letter-spacing:-0.8px">...</span></div><svg style="position:absolute;left:2773.70px;top:910.60px;" width="17.40" height="17.40" viewBox="0 0 17.4 17.4" preserveAspectRatio="none"><rect x="0" y="0" width="17.4" height="17.4" rx="3" fill="#175a93"/><path d="M5 12.5 L11.5 6 M8 4.8 H12.6 V9.4" fill="none" stroke="#fff" stroke-width="2.2" stroke-linecap="round"/></svg><svg style="position:absolute;left:2938.70px;top:906.50px;" width="31.70" height="25.30" viewBox="0 0 32 25.5" preserveAspectRatio="none"><path d="M2.5 0 H21 V6 A4 4 0 0 0 25 10 H32 V23 A2.5 2.5 0 0 1 29.5 25.5 H2.5 A2.5 2.5 0 0 1 0 23 V2.5 A2.5 2.5 0 0 1 2.5 0Z" fill="#175a93"/><path d="M23.5 0 L32 8 H25 A1.5 1.5 0 0 1 23.5 6.5Z" fill="#175a93"/><circle cx="9" cy="8.8" r="3.9" fill="#ffffff"/><path d="M5 21.5 L10 15.8 L13 17 L18.5 12 L26 21.5Z" fill="#ffffff" stroke="#ffffff" stroke-width="1" stroke-linejoin="round"/></svg><div style="position:absolute;left:734.60px;top:976.30px;width:30.20px;height:30.00px;border:2.2px solid #8e96a8;border-radius:6.5px;box-sizing:border-box;"></div><svg style="position:absolute;left:785.50px;top:979.80px;" width="38.50" height="23.00" viewBox="0 0 38.5 23" preserveAspectRatio="none"><path d="M0.5 11.5 C6 4 12.5 0.3 19.25 0.3 C26 0.3 32.5 4 38 11.5 C32.5 19 26 22.7 19.25 22.7 C12.5 22.7 6 19 0.5 11.5Z" fill="#818aa5"/><circle cx="19.2" cy="11.5" r="5.9" fill="#fff"/></svg><svg style="position:absolute;left:845.00px;top:976.80px;" width="27.50" height="29.00" viewBox="0 0 27.5 29" preserveAspectRatio="none"><path d="M0.2 28 L1.8 19.6 L17 4.5 L23.3 10.8 L8.2 26 Z" fill="#818aa5"/><path d="M18.8 2.8 L20.2 1.4 A3.3 3.3 0 0 1 24.8 1.4 L25.6 2.2 A3.3 3.3 0 0 1 25.6 6.8 L25 9.1Z" fill="#818aa5"/></svg><div style="position:absolute;left:907.00px;top:971.30px;width:129.00px;height:40.00px;background:#e6f6f7;border-radius:20px;"></div><div class="t" style="position:absolute;left:926.90px;top:980.70px;font-size:21.14px;line-height:21.14px;font-weight:400;color:#17595f;white-space:nowrap;letter-spacing:-0.117px;-webkit-text-stroke:0.35px #17595f;">Approved</div><svg style="position:absolute;left:1084.60px;top:985.30px;" width="17.60" height="12.00" viewBox="0 0 17.60 12.00" preserveAspectRatio="none"><path d="M1 1 H16.60 L8.80 11.00Z" fill="#8a90a7" stroke="#8a90a7" stroke-width="2" stroke-linejoin="round"/></svg><div class="t" style="position:absolute;left:1134.50px;top:980.20px;font-size:22.80px;line-height:22.80px;font-weight:400;color:#22262f;white-space:nowrap;letter-spacing:-1.023px;">No</div><div class="t" style="position:absolute;left:1419.30px;top:980.20px;font-size:22.80px;line-height:22.80px;font-weight:400;color:#22262f;white-space:nowrap;letter-spacing:-0.506px;">Emergency</div><div class="t" style="position:absolute;left:1780.25px;top:980.20px;font-size:22.80px;line-height:22.80px;font-weight:400;color:#22262f;white-space:nowrap;letter-spacing:0.179px;">30 minutes–1 hour</div><svg style="position:absolute;left:2072.00px;top:982.60px;" width="17.40" height="17.40" viewBox="0 0 17.4 17.4" preserveAspectRatio="none"><rect x="0" y="0" width="17.4" height="17.4" rx="3" fill="#175a93"/><path d="M5 12.5 L11.5 6 M8 4.8 H12.6 V9.4" fill="none" stroke="#fff" stroke-width="2.2" stroke-linecap="round"/></svg><svg style="position:absolute;left:2181.50px;top:976.80px;" width="21.50" height="28.50" viewBox="0 0 21.5 28.5" preserveAspectRatio="none"><path d="M3 3 L19 14.25 L3 25.5Z" fill="#155a94" stroke="#155a94" stroke-width="5" stroke-linejoin="round"/></svg><div style="position:absolute;left:2241.30px;top:965.00px;width:137.00px;height:52.40px;background:#2095f3;border-radius:12px;"></div><div class="t" style="position:absolute;left:2263.60px;top:980.46px;font-size:21.43px;line-height:21.43px;font-weight:700;color:#ffffff;white-space:nowrap;letter-spacing:-0.261px;">Open</div><svg style="position:absolute;left:2332.50px;top:981.00px;" width="21.00" height="20.60" viewBox="0 0 21 20.6" preserveAspectRatio="none"><path d="M2 18.6 L18 2.6 M6.5 2 H18.8 V14.2" fill="none" stroke="#fff" stroke-width="3.3" stroke-linecap="square"/></svg><div class="t" style="position:absolute;left:2459.40px;top:980.20px;font-size:22.80px;line-height:22.80px;font-weight:400;color:#22262f;white-space:nowrap;letter-spacing:-0.141px;">The clinic hours didn’t matc<span style="letter-spacing:-0.8px">...</span></div><svg style="position:absolute;left:2773.70px;top:982.60px;" width="17.40" height="17.40" viewBox="0 0 17.4 17.4" preserveAspectRatio="none"><rect x="0" y="0" width="17.4" height="17.4" rx="3" fill="#175a93"/><path d="M5 12.5 L11.5 6 M8 4.8 H12.6 V9.4" fill="none" stroke="#fff" stroke-width="2.2" stroke-linecap="round"/></svg><svg style="position:absolute;left:2938.70px;top:978.50px;" width="31.70" height="25.30" viewBox="0 0 32 25.5" preserveAspectRatio="none"><path d="M2.5 0 H21 V6 A4 4 0 0 0 25 10 H32 V23 A2.5 2.5 0 0 1 29.5 25.5 H2.5 A2.5 2.5 0 0 1 0 23 V2.5 A2.5 2.5 0 0 1 2.5 0Z" fill="#175a93"/><path d="M23.5 0 L32 8 H25 A1.5 1.5 0 0 1 23.5 6.5Z" fill="#175a93"/><circle cx="9" cy="8.8" r="3.9" fill="#ffffff"/><path d="M5 21.5 L10 15.8 L13 17 L18.5 12 L26 21.5Z" fill="#ffffff" stroke="#ffffff" stroke-width="1" stroke-linejoin="round"/></svg><div style="position:absolute;left:734.60px;top:1048.30px;width:30.20px;height:30.00px;border:2.2px solid #8e96a8;border-radius:6.5px;box-sizing:border-box;"></div><svg style="position:absolute;left:785.50px;top:1051.80px;" width="38.50" height="23.00" viewBox="0 0 38.5 23" preserveAspectRatio="none"><path d="M0.5 11.5 C6 4 12.5 0.3 19.25 0.3 C26 0.3 32.5 4 38 11.5 C32.5 19 26 22.7 19.25 22.7 C12.5 22.7 6 19 0.5 11.5Z" fill="#818aa5"/><circle cx="19.2" cy="11.5" r="5.9" fill="#fff"/></svg><svg style="position:absolute;left:845.00px;top:1048.80px;" width="27.50" height="29.00" viewBox="0 0 27.5 29" preserveAspectRatio="none"><path d="M0.2 28 L1.8 19.6 L17 4.5 L23.3 10.8 L8.2 26 Z" fill="#818aa5"/><path d="M18.8 2.8 L20.2 1.4 A3.3 3.3 0 0 1 24.8 1.4 L25.6 2.2 A3.3 3.3 0 0 1 25.6 6.8 L25 9.1Z" fill="#818aa5"/></svg><div style="position:absolute;left:906.70px;top:1042.30px;width:139.00px;height:42.00px;background:#e6f6f7;border-radius:21px;"></div><div class="t" style="position:absolute;left:926.70px;top:1051.61px;font-size:23.26px;line-height:23.26px;font-weight:400;color:#17595f;white-space:nowrap;letter-spacing:-0.080px;-webkit-text-stroke:0.4px #17595f;">Approved</div><svg style="position:absolute;left:1084.60px;top:1057.30px;" width="17.60" height="12.00" viewBox="0 0 17.60 12.00" preserveAspectRatio="none"><path d="M1 1 H16.60 L8.80 11.00Z" fill="#8a90a7" stroke="#8a90a7" stroke-width="2" stroke-linejoin="round"/></svg><div class="t" style="position:absolute;left:1134.50px;top:1052.20px;font-size:22.80px;line-height:22.80px;font-weight:400;color:#22262f;white-space:nowrap;letter-spacing:-1.023px;">No</div><div class="t" style="position:absolute;left:1419.30px;top:1052.20px;font-size:22.80px;line-height:22.80px;font-weight:400;color:#22262f;white-space:nowrap;letter-spacing:-0.506px;">Emergency</div><div class="t" style="position:absolute;left:1780.25px;top:1052.20px;font-size:22.80px;line-height:22.80px;font-weight:400;color:#22262f;white-space:nowrap;letter-spacing:0.179px;">30 minutes–1 hour</div><svg style="position:absolute;left:2072.00px;top:1054.60px;" width="17.40" height="17.40" viewBox="0 0 17.4 17.4" preserveAspectRatio="none"><rect x="0" y="0" width="17.4" height="17.4" rx="3" fill="#175a93"/><path d="M5 12.5 L11.5 6 M8 4.8 H12.6 V9.4" fill="none" stroke="#fff" stroke-width="2.2" stroke-linecap="round"/></svg><svg style="position:absolute;left:2181.50px;top:1048.80px;" width="21.50" height="28.50" viewBox="0 0 21.5 28.5" preserveAspectRatio="none"><path d="M3 3 L19 14.25 L3 25.5Z" fill="#155a94" stroke="#155a94" stroke-width="5" stroke-linejoin="round"/></svg><div style="position:absolute;left:2241.30px;top:1037.00px;width:137.00px;height:52.40px;background:#2095f3;border-radius:12px;"></div><div class="t" style="position:absolute;left:2263.60px;top:1052.46px;font-size:21.43px;line-height:21.43px;font-weight:700;color:#ffffff;white-space:nowrap;letter-spacing:-0.261px;">Open</div><svg style="position:absolute;left:2332.50px;top:1053.00px;" width="21.00" height="20.60" viewBox="0 0 21 20.6" preserveAspectRatio="none"><path d="M2 18.6 L18 2.6 M6.5 2 H18.8 V14.2" fill="none" stroke="#fff" stroke-width="3.3" stroke-linecap="square"/></svg><div class="t" style="position:absolute;left:2459.40px;top:1052.20px;font-size:22.80px;line-height:22.80px;font-weight:400;color:#22262f;white-space:nowrap;letter-spacing:-0.139px;">I got treatment, but they did<span style="letter-spacing:-0.8px">...</span></div><svg style="position:absolute;left:2773.70px;top:1054.60px;" width="17.40" height="17.40" viewBox="0 0 17.4 17.4" preserveAspectRatio="none"><rect x="0" y="0" width="17.4" height="17.4" rx="3" fill="#175a93"/><path d="M5 12.5 L11.5 6 M8 4.8 H12.6 V9.4" fill="none" stroke="#fff" stroke-width="2.2" stroke-linecap="round"/></svg><svg style="position:absolute;left:2938.70px;top:1050.50px;" width="31.70" height="25.30" viewBox="0 0 32 25.5" preserveAspectRatio="none"><path d="M2.5 0 H21 V6 A4 4 0 0 0 25 10 H32 V23 A2.5 2.5 0 0 1 29.5 25.5 H2.5 A2.5 2.5 0 0 1 0 23 V2.5 A2.5 2.5 0 0 1 2.5 0Z" fill="#175a93"/><path d="M23.5 0 L32 8 H25 A1.5 1.5 0 0 1 23.5 6.5Z" fill="#175a93"/><circle cx="9" cy="8.8" r="3.9" fill="#ffffff"/><path d="M5 21.5 L10 15.8 L13 17 L18.5 12 L26 21.5Z" fill="#ffffff" stroke="#ffffff" stroke-width="1" stroke-linejoin="round"/></svg><div style="position:absolute;left:734.60px;top:1120.30px;width:30.20px;height:30.00px;border:2.2px solid #8e96a8;border-radius:6.5px;box-sizing:border-box;"></div><svg style="position:absolute;left:785.50px;top:1123.80px;" width="38.50" height="23.00" viewBox="0 0 38.5 23" preserveAspectRatio="none"><path d="M0.5 11.5 C6 4 12.5 0.3 19.25 0.3 C26 0.3 32.5 4 38 11.5 C32.5 19 26 22.7 19.25 22.7 C12.5 22.7 6 19 0.5 11.5Z" fill="#818aa5"/><circle cx="19.2" cy="11.5" r="5.9" fill="#fff"/></svg><svg style="position:absolute;left:845.00px;top:1120.80px;" width="27.50" height="29.00" viewBox="0 0 27.5 29" preserveAspectRatio="none"><path d="M0.2 28 L1.8 19.6 L17 4.5 L23.3 10.8 L8.2 26 Z" fill="#818aa5"/><path d="M18.8 2.8 L20.2 1.4 A3.3 3.3 0 0 1 24.8 1.4 L25.6 2.2 A3.3 3.3 0 0 1 25.6 6.8 L25 9.1Z" fill="#818aa5"/></svg><div style="position:absolute;left:906.70px;top:1114.30px;width:118.00px;height:42.00px;background:#fee3cc;border-radius:21px;"></div><div class="t" style="position:absolute;left:926.70px;top:1123.93px;font-size:22.89px;line-height:22.89px;font-weight:400;color:#7a3d05;white-space:nowrap;letter-spacing:-0.193px;-webkit-text-stroke:0.4px #7a3d05;">On hold</div><svg style="position:absolute;left:1084.60px;top:1129.30px;" width="17.60" height="12.00" viewBox="0 0 17.60 12.00" preserveAspectRatio="none"><path d="M1 1 H16.60 L8.80 11.00Z" fill="#8a90a7" stroke="#8a90a7" stroke-width="2" stroke-linejoin="round"/></svg><div class="t" style="position:absolute;left:1134.50px;top:1124.20px;font-size:22.80px;line-height:22.80px;font-weight:400;color:#22262f;white-space:nowrap;letter-spacing:-0.653px;">Yes</div><div class="t" style="position:absolute;left:1419.30px;top:1124.20px;font-size:22.80px;line-height:22.80px;font-weight:400;color:#22262f;white-space:nowrap;letter-spacing:-0.500px;">Other</div><div class="t" style="position:absolute;left:1780.25px;top:1124.20px;font-size:22.80px;line-height:22.80px;font-weight:400;color:#22262f;white-space:nowrap;letter-spacing:0.179px;">30 minutes–1 hour</div><svg style="position:absolute;left:2072.00px;top:1126.60px;" width="17.40" height="17.40" viewBox="0 0 17.4 17.4" preserveAspectRatio="none"><rect x="0" y="0" width="17.4" height="17.4" rx="3" fill="#175a93"/><path d="M5 12.5 L11.5 6 M8 4.8 H12.6 V9.4" fill="none" stroke="#fff" stroke-width="2.2" stroke-linecap="round"/></svg><svg style="position:absolute;left:2181.50px;top:1120.80px;" width="21.50" height="28.50" viewBox="0 0 21.5 28.5" preserveAspectRatio="none"><path d="M3 3 L19 14.25 L3 25.5Z" fill="#155a94" stroke="#155a94" stroke-width="5" stroke-linejoin="round"/></svg><div style="position:absolute;left:2241.30px;top:1109.00px;width:137.00px;height:52.40px;background:#2095f3;border-radius:12px;"></div><div class="t" style="position:absolute;left:2263.60px;top:1124.46px;font-size:21.43px;line-height:21.43px;font-weight:700;color:#ffffff;white-space:nowrap;letter-spacing:-0.261px;">Open</div><svg style="position:absolute;left:2332.50px;top:1125.00px;" width="21.00" height="20.60" viewBox="0 0 21 20.6" preserveAspectRatio="none"><path d="M2 18.6 L18 2.6 M6.5 2 H18.8 V14.2" fill="none" stroke="#fff" stroke-width="3.3" stroke-linecap="square"/></svg><div class="t" style="position:absolute;left:2459.40px;top:1124.20px;font-size:22.80px;line-height:22.80px;font-weight:400;color:#22262f;white-space:nowrap;letter-spacing:-0.138px;">The staff were helpful, but t<span style="letter-spacing:-0.8px">...</span></div><svg style="position:absolute;left:2773.70px;top:1126.60px;" width="17.40" height="17.40" viewBox="0 0 17.4 17.4" preserveAspectRatio="none"><rect x="0" y="0" width="17.4" height="17.4" rx="3" fill="#175a93"/><path d="M5 12.5 L11.5 6 M8 4.8 H12.6 V9.4" fill="none" stroke="#fff" stroke-width="2.2" stroke-linecap="round"/></svg><svg style="position:absolute;left:2938.70px;top:1122.50px;" width="31.70" height="25.30" viewBox="0 0 32 25.5" preserveAspectRatio="none"><path d="M2.5 0 H21 V6 A4 4 0 0 0 25 10 H32 V23 A2.5 2.5 0 0 1 29.5 25.5 H2.5 A2.5 2.5 0 0 1 0 23 V2.5 A2.5 2.5 0 0 1 2.5 0Z" fill="#175a93"/><path d="M23.5 0 L32 8 H25 A1.5 1.5 0 0 1 23.5 6.5Z" fill="#175a93"/><circle cx="9" cy="8.8" r="3.9" fill="#ffffff"/><path d="M5 21.5 L10 15.8 L13 17 L18.5 12 L26 21.5Z" fill="#ffffff" stroke="#ffffff" stroke-width="1" stroke-linejoin="round"/></svg><div style="position:absolute;left:734.60px;top:1192.30px;width:30.20px;height:30.00px;border:2.2px solid #8e96a8;border-radius:6.5px;box-sizing:border-box;"></div><svg style="position:absolute;left:785.50px;top:1195.80px;" width="38.50" height="23.00" viewBox="0 0 38.5 23" preserveAspectRatio="none"><path d="M0.5 11.5 C6 4 12.5 0.3 19.25 0.3 C26 0.3 32.5 4 38 11.5 C32.5 19 26 22.7 19.25 22.7 C12.5 22.7 6 19 0.5 11.5Z" fill="#818aa5"/><circle cx="19.2" cy="11.5" r="5.9" fill="#fff"/></svg><svg style="position:absolute;left:845.00px;top:1192.80px;" width="27.50" height="29.00" viewBox="0 0 27.5 29" preserveAspectRatio="none"><path d="M0.2 28 L1.8 19.6 L17 4.5 L23.3 10.8 L8.2 26 Z" fill="#818aa5"/><path d="M18.8 2.8 L20.2 1.4 A3.3 3.3 0 0 1 24.8 1.4 L25.6 2.2 A3.3 3.3 0 0 1 25.6 6.8 L25 9.1Z" fill="#818aa5"/></svg><div style="position:absolute;left:907.00px;top:1187.30px;width:167.00px;height:40.00px;background:#fde6e7;border-radius:20px;"></div><div class="t" style="position:absolute;left:926.90px;top:1196.61px;font-size:21.25px;line-height:21.25px;font-weight:400;color:#9d3f48;white-space:nowrap;letter-spacing:-0.073px;-webkit-text-stroke:0.35px #9d3f48;">Not approved</div><svg style="position:absolute;left:1084.60px;top:1201.30px;" width="17.60" height="12.00" viewBox="0 0 17.60 12.00" preserveAspectRatio="none"><path d="M1 1 H16.60 L8.80 11.00Z" fill="#8a90a7" stroke="#8a90a7" stroke-width="2" stroke-linejoin="round"/></svg><div class="t" style="position:absolute;left:1134.50px;top:1196.20px;font-size:22.80px;line-height:22.80px;font-weight:400;color:#22262f;white-space:nowrap;letter-spacing:-0.653px;">Yes</div><div class="t" style="position:absolute;left:1419.30px;top:1196.20px;font-size:22.80px;line-height:22.80px;font-weight:400;color:#22262f;white-space:nowrap;letter-spacing:-0.403px;">Sickness, Other</div><div class="t" style="position:absolute;left:1780.25px;top:1196.20px;font-size:22.80px;line-height:22.80px;font-weight:400;color:#22262f;white-space:nowrap;letter-spacing:0.056px;">1–2 hours</div><svg style="position:absolute;left:2072.00px;top:1198.60px;" width="17.40" height="17.40" viewBox="0 0 17.4 17.4" preserveAspectRatio="none"><rect x="0" y="0" width="17.4" height="17.4" rx="3" fill="#175a93"/><path d="M5 12.5 L11.5 6 M8 4.8 H12.6 V9.4" fill="none" stroke="#fff" stroke-width="2.2" stroke-linecap="round"/></svg><svg style="position:absolute;left:2181.50px;top:1192.80px;" width="21.50" height="28.50" viewBox="0 0 21.5 28.5" preserveAspectRatio="none"><path d="M3 3 L19 14.25 L3 25.5Z" fill="#155a94" stroke="#155a94" stroke-width="5" stroke-linejoin="round"/></svg><div style="position:absolute;left:2241.30px;top:1181.00px;width:137.00px;height:52.40px;background:#2095f3;border-radius:12px;"></div><div class="t" style="position:absolute;left:2263.60px;top:1196.46px;font-size:21.43px;line-height:21.43px;font-weight:700;color:#ffffff;white-space:nowrap;letter-spacing:-0.261px;">Open</div><svg style="position:absolute;left:2332.50px;top:1197.00px;" width="21.00" height="20.60" viewBox="0 0 21 20.6" preserveAspectRatio="none"><path d="M2 18.6 L18 2.6 M6.5 2 H18.8 V14.2" fill="none" stroke="#fff" stroke-width="3.3" stroke-linecap="square"/></svg><div class="t" style="position:absolute;left:2459.40px;top:1196.20px;font-size:22.80px;line-height:22.80px;font-weight:400;color:#22262f;white-space:nowrap;letter-spacing:-0.140px;">The staff was polite, but the<span style="letter-spacing:-0.8px">...</span></div><svg style="position:absolute;left:2773.70px;top:1198.60px;" width="17.40" height="17.40" viewBox="0 0 17.4 17.4" preserveAspectRatio="none"><rect x="0" y="0" width="17.4" height="17.4" rx="3" fill="#175a93"/><path d="M5 12.5 L11.5 6 M8 4.8 H12.6 V9.4" fill="none" stroke="#fff" stroke-width="2.2" stroke-linecap="round"/></svg><svg style="position:absolute;left:2938.70px;top:1194.50px;" width="31.70" height="25.30" viewBox="0 0 32 25.5" preserveAspectRatio="none"><path d="M2.5 0 H21 V6 A4 4 0 0 0 25 10 H32 V23 A2.5 2.5 0 0 1 29.5 25.5 H2.5 A2.5 2.5 0 0 1 0 23 V2.5 A2.5 2.5 0 0 1 2.5 0Z" fill="#175a93"/><path d="M23.5 0 L32 8 H25 A1.5 1.5 0 0 1 23.5 6.5Z" fill="#175a93"/><circle cx="9" cy="8.8" r="3.9" fill="#ffffff"/><path d="M5 21.5 L10 15.8 L13 17 L18.5 12 L26 21.5Z" fill="#ffffff" stroke="#ffffff" stroke-width="1" stroke-linejoin="round"/></svg><div style="position:absolute;left:734.60px;top:1264.30px;width:30.20px;height:30.00px;border:2.2px solid #8e96a8;border-radius:6.5px;box-sizing:border-box;"></div><svg style="position:absolute;left:785.50px;top:1267.80px;" width="38.50" height="23.00" viewBox="0 0 38.5 23" preserveAspectRatio="none"><path d="M0.5 11.5 C6 4 12.5 0.3 19.25 0.3 C26 0.3 32.5 4 38 11.5 C32.5 19 26 22.7 19.25 22.7 C12.5 22.7 6 19 0.5 11.5Z" fill="#818aa5"/><circle cx="19.2" cy="11.5" r="5.9" fill="#fff"/></svg><svg style="position:absolute;left:845.00px;top:1264.80px;" width="27.50" height="29.00" viewBox="0 0 27.5 29" preserveAspectRatio="none"><path d="M0.2 28 L1.8 19.6 L17 4.5 L23.3 10.8 L8.2 26 Z" fill="#818aa5"/><path d="M18.8 2.8 L20.2 1.4 A3.3 3.3 0 0 1 24.8 1.4 L25.6 2.2 A3.3 3.3 0 0 1 25.6 6.8 L25 9.1Z" fill="#818aa5"/></svg><div style="position:absolute;left:906.70px;top:1258.30px;width:139.00px;height:42.00px;background:#e6f6f7;border-radius:21px;"></div><div class="t" style="position:absolute;left:926.70px;top:1267.61px;font-size:23.26px;line-height:23.26px;font-weight:400;color:#17595f;white-space:nowrap;letter-spacing:-0.080px;-webkit-text-stroke:0.4px #17595f;">Approved</div><svg style="position:absolute;left:1084.60px;top:1273.30px;" width="17.60" height="12.00" viewBox="0 0 17.60 12.00" preserveAspectRatio="none"><path d="M1 1 H16.60 L8.80 11.00Z" fill="#8a90a7" stroke="#8a90a7" stroke-width="2" stroke-linejoin="round"/></svg><div class="t" style="position:absolute;left:1134.50px;top:1268.20px;font-size:22.80px;line-height:22.80px;font-weight:400;color:#22262f;white-space:nowrap;letter-spacing:-0.653px;">Yes</div><div class="t" style="position:absolute;left:1419.30px;top:1268.20px;font-size:22.80px;line-height:22.80px;font-weight:400;color:#22262f;white-space:nowrap;letter-spacing:-0.319px;">Sickness</div><div class="t" style="position:absolute;left:1780.25px;top:1268.20px;font-size:22.80px;line-height:22.80px;font-weight:400;color:#22262f;white-space:nowrap;letter-spacing:0.056px;">1–2 hours</div><svg style="position:absolute;left:2072.00px;top:1270.60px;" width="17.40" height="17.40" viewBox="0 0 17.4 17.4" preserveAspectRatio="none"><rect x="0" y="0" width="17.4" height="17.4" rx="3" fill="#175a93"/><path d="M5 12.5 L11.5 6 M8 4.8 H12.6 V9.4" fill="none" stroke="#fff" stroke-width="2.2" stroke-linecap="round"/></svg><svg style="position:absolute;left:2181.50px;top:1264.80px;" width="21.50" height="28.50" viewBox="0 0 21.5 28.5" preserveAspectRatio="none"><path d="M3 3 L19 14.25 L3 25.5Z" fill="#155a94" stroke="#155a94" stroke-width="5" stroke-linejoin="round"/></svg><div style="position:absolute;left:2241.30px;top:1253.00px;width:137.00px;height:52.40px;background:#2095f3;border-radius:12px;"></div><div class="t" style="position:absolute;left:2263.60px;top:1268.46px;font-size:21.43px;line-height:21.43px;font-weight:700;color:#ffffff;white-space:nowrap;letter-spacing:-0.261px;">Open</div><svg style="position:absolute;left:2332.50px;top:1269.00px;" width="21.00" height="20.60" viewBox="0 0 21 20.6" preserveAspectRatio="none"><path d="M2 18.6 L18 2.6 M6.5 2 H18.8 V14.2" fill="none" stroke="#fff" stroke-width="3.3" stroke-linecap="square"/></svg><div class="t" style="position:absolute;left:2459.40px;top:1268.20px;font-size:22.80px;line-height:22.80px;font-weight:400;color:#22262f;white-space:nowrap;letter-spacing:-0.143px;">I had to return twice becaus<span style="letter-spacing:-0.8px">...</span></div><svg style="position:absolute;left:2773.70px;top:1270.60px;" width="17.40" height="17.40" viewBox="0 0 17.4 17.4" preserveAspectRatio="none"><rect x="0" y="0" width="17.4" height="17.4" rx="3" fill="#175a93"/><path d="M5 12.5 L11.5 6 M8 4.8 H12.6 V9.4" fill="none" stroke="#fff" stroke-width="2.2" stroke-linecap="round"/></svg><svg style="position:absolute;left:2938.70px;top:1266.50px;" width="31.70" height="25.30" viewBox="0 0 32 25.5" preserveAspectRatio="none"><path d="M2.5 0 H21 V6 A4 4 0 0 0 25 10 H32 V23 A2.5 2.5 0 0 1 29.5 25.5 H2.5 A2.5 2.5 0 0 1 0 23 V2.5 A2.5 2.5 0 0 1 2.5 0Z" fill="#175a93"/><path d="M23.5 0 L32 8 H25 A1.5 1.5 0 0 1 23.5 6.5Z" fill="#175a93"/><circle cx="9" cy="8.8" r="3.9" fill="#ffffff"/><path d="M5 21.5 L10 15.8 L13 17 L18.5 12 L26 21.5Z" fill="#ffffff" stroke="#ffffff" stroke-width="1" stroke-linejoin="round"/></svg></div><div style="position:absolute;left:717.00px;top:1282.50px;width:340.00px;height:20.00px;background:#fff;border-radius:10px;"></div><div style="position:absolute;left:718.60px;top:1284.50px;width:336.40px;height:16.50px;background:#d2d4d9;border-radius:9px;"></div><svg style="position:absolute;left:724.50px;top:1361.00px;" width="16.00" height="21.00" viewBox="0 0 16 21" preserveAspectRatio="none"><path d="M14 2 L2 10.5 L14 19Z" fill="#7fa6ca" stroke="#7fa6ca" stroke-width="3" stroke-linejoin="round"/></svg><div class="t" style="position:absolute;left:758.00px;top:1360.69px;font-size:21.63px;line-height:21.63px;font-weight:700;color:#7fa6ca;white-space:nowrap;letter-spacing:-0.534px;">Prev</div><div class="t" style="position:absolute;left:843.80px;top:1358.75px;font-size:25.57px;line-height:25.57px;font-weight:400;color:#4c5263;white-space:nowrap;letter-spacing:-0.179px;">Page</div><div style="position:absolute;left:926.90px;top:1341.20px;width:80.70px;height:59.70px;border:2px solid #dfe2ea;border-radius:11px;box-sizing:border-box;"></div><div class="t" style="position:absolute;left:944.00px;top:1357.99px;font-size:26.00px;line-height:26.00px;font-weight:700;color:#4c5263;white-space:nowrap;">1</div><svg style="position:absolute;left:973.50px;top:1358.50px;" width="17.50" height="24.00" viewBox="0 0 17.5 24" preserveAspectRatio="none"><rect x="0.5" y="0.5" width="16.5" height="23" rx="5" fill="none" stroke="#eceef2" stroke-width="1"/><line x1="0.5" y1="12" x2="17" y2="12" stroke="#eceef2" stroke-width="1"/><polyline points="4.5,8.5 8.75,4.5 13,8.5" fill="none" stroke="#333" stroke-width="1.9"/><polyline points="4.5,15.5 8.75,19.5 13,15.5" fill="none" stroke="#333" stroke-width="1.9"/></svg><div class="t" style="position:absolute;left:1031.00px;top:1357.99px;font-size:26.47px;line-height:26.47px;font-weight:400;color:#4c5263;white-space:nowrap;letter-spacing:0.140px;">of 168</div><div class="t" style="position:absolute;left:1145.30px;top:1360.31px;font-size:22.08px;line-height:22.08px;font-weight:700;color:#0f5391;white-space:nowrap;letter-spacing:-0.357px;">Next</div><svg style="position:absolute;left:1210.50px;top:1361.00px;" width="16.00" height="21.00" viewBox="0 0 16 21" preserveAspectRatio="none"><path d="M2 2 L14 10.5 L2 19Z" fill="#0f5391" stroke="#0f5391" stroke-width="3" stroke-linejoin="round"/></svg><div style="position:absolute;left:2876.30px;top:1340.00px;width:180.70px;height:62.50px;border:2px solid #dfe2ea;border-radius:11px;box-sizing:border-box;"></div><div class="t" style="position:absolute;left:2891.30px;top:1359.77px;font-size:22.71px;line-height:22.71px;font-weight:400;color:#3d4352;white-space:nowrap;letter-spacing:-0.090px;">30 rows</div><svg style="position:absolute;left:3017.50px;top:1365.50px;" width="20.00" height="12.00" viewBox="0 0 20.00 12.00" preserveAspectRatio="none"><polyline points="1.5,1.5 10.00,10.50 18.50,1.5" fill="none" stroke="#6b7180" stroke-width="3" stroke-linecap="round" stroke-linejoin="round"/></svg><div style="position:absolute;left:28.3px;top:474.4px;width:668.5px;height:1100px;border-radius:76px;background:#0d0d0d;"></div><div style="position:absolute;left:35px;top:481px;width:655px;height:1100px;border-radius:70px;background:#000;"></div><div style="position:absolute;left:41px;top:495px;width:645px;height:1100px;border-radius:62px;border:3px solid #a8a8a8;box-sizing:border-box;opacity:0.75;filter:blur(0.6px);-webkit-mask-image:linear-gradient(to right, #000 0, #000 45px, transparent 115px, transparent 530px, #000 600px, #000 100%);"></div><div style="position:absolute;left:47.5px;top:500.5px;width:632px;height:1100px;border-radius:56px;border:4.5px solid #555;box-sizing:border-box;opacity:0.8;filter:blur(0.8px);-webkit-mask-image:linear-gradient(to right, #000 0, #000 45px, transparent 115px, transparent 530px, #000 600px, #000 100%);"></div><div style="position:absolute;left:52.5px;top:505px;width:622px;height:1100px;border-radius:52px;background:#000;"></div><div style="position:absolute;left:695.50px;top:783.00px;width:7.50px;height:98.50px;background:#151515;border-radius:0 2px 2px 0;"></div><div style="position:absolute;left:695.50px;top:979.70px;width:7.50px;height:196.80px;background:#151515;border-radius:0 2px 2px 0;"></div><div style="position:absolute;left:286.00px;top:515.60px;width:156.00px;height:19.20px;background:#2b2b2b;border-radius:10px;"></div><div style="position:absolute;left:144px;top:537.4px;width:20px;height:20px;border-radius:50%;background:radial-gradient(circle at 68% 70%, #3f56b8 0, #2a3b8a 14%, #0b0e20 36%, #040404 55%);box-shadow:0 0 0 1.3px #22201e;"></div><div style="position:absolute;left:150.3px;top:541.2px;width:3.6px;height:3.6px;border-radius:50%;background:#e8e8e8;"></div><div style="position:absolute;left:221px;top:532px;width:30.8px;height:30.8px;border-radius:50%;background:radial-gradient(circle at 66% 70%, #4760c6 0, #2d3f95 14%, #0b0e20 36%, #040404 55%);box-shadow:0 0 0 1.6px #24221f;"></div><div style="position:absolute;left:229.3px;top:537px;width:5.4px;height:5.4px;border-radius:50%;background:#f0f0f0;"></div><div style="position:absolute;left:59.5px;top:586px;width:607.7px;height:900px;border-radius:26px 26px 0 0;background:#fff;"></div><div class="t" style="position:absolute;left:85.30px;top:626.67px;font-size:31.46px;line-height:31.46px;font-weight:400;color:#1d2027;white-space:nowrap;letter-spacing:-0.067px;">Health Needs Survey</div><svg style="position:absolute;left:474.80px;top:624.40px;" width="28.50" height="28.90" viewBox="0 0 28.5 28.9" preserveAspectRatio="none"><path d="M2.5 0 H22 L28.5 6.5 V26.4 A2.5 2.5 0 0 1 26 28.9 H2.5 A2.5 2.5 0 0 1 0 26.4 V2.5 A2.5 2.5 0 0 1 2.5 0Z" fill="#04202e"/><rect x="3.3" y="3.4" width="15.8" height="6.3" fill="#fff"/><circle cx="14.1" cy="20.8" r="4.9" fill="#fff"/></svg><svg style="position:absolute;left:545.00px;top:618.00px;" width="40.00" height="40.00" viewBox="0 0 40 40" preserveAspectRatio="none"><path d="M7 12.4 L12.6 6.8 L22.55 16.75 L26.6 12.7 V26.4 H12.8 L16.95 22.35Z" fill="#04202e"/><circle cx="31.6" cy="31.4" r="3.5" fill="#04202e"/></svg><div style="position:absolute;left:629.4px;top:626.80px;width:6.6px;height:6.6px;border-radius:50%;background:#45404a;"></div><div style="position:absolute;left:629.4px;top:636.40px;width:6.6px;height:6.6px;border-radius:50%;background:#45404a;"></div><div style="position:absolute;left:629.4px;top:646.00px;width:6.6px;height:6.6px;border-radius:50%;background:#45404a;"></div><div style="position:absolute;left:59.50px;top:690.00px;width:607.70px;height:2.50px;background:#e8eaec;box-shadow:0 1px 2px rgba(0,0,0,0.05);"></div><svg style="position:absolute;left:88.00px;top:728.00px;" width="32.00" height="36.00" viewBox="0 0 32 36" preserveAspectRatio="none"><rect x="11.1" y="3.6" width="8.9" height="19.2" rx="4.45" fill="#04202e"/><path d="M5.3 19 A10.2 10.2 0 0 0 25.7 19" fill="none" stroke="#04202e" stroke-width="3"/><rect x="14.2" y="28" width="3" height="6" fill="#04202e"/></svg><div class="t" style="position:absolute;left:136.50px;top:736.97px;font-size:25.20px;line-height:25.20px;font-weight:400;color:#152733;white-space:nowrap;letter-spacing:-0.269px;">00:26</div><div style="position:absolute;left:225.60px;top:741.60px;width:32.20px;height:12.10px;background:#dfe2e4;border-radius:4px;"></div><div style="position:absolute;left:264.40px;top:741.60px;width:32.20px;height:12.10px;background:#dfe2e4;border-radius:4px;"></div><div style="position:absolute;left:303.20px;top:741.60px;width:32.20px;height:12.10px;background:#dfe2e4;border-radius:4px;"></div><div style="position:absolute;left:342.00px;top:741.60px;width:32.20px;height:12.10px;background:#dfe2e4;border-radius:4px;"></div><div style="position:absolute;left:380.80px;top:741.60px;width:32.20px;height:12.10px;background:#dfe2e4;border-radius:4px;"></div><div style="position:absolute;left:471.4px;top:716.7px;width:63px;height:63px;border-radius:50%;border:1.5px solid #dedede;box-sizing:border-box;"></div><div style="position:absolute;left:494.00px;top:739.00px;width:6.00px;height:18.30px;background:#46a3d0;"></div><div style="position:absolute;left:505.60px;top:739.00px;width:6.00px;height:18.30px;background:#46a3d0;"></div><div style="position:absolute;left:572.4px;top:716.4px;width:63.6px;height:63.6px;border-radius:50%;background:#46a3d1;"></div><div style="position:absolute;left:596.00px;top:740.00px;width:16.60px;height:16.40px;background:#fff;"></div><div class="t" style="position:absolute;left:85.50px;top:825.83px;font-size:31.28px;line-height:31.28px;font-weight:400;color:#1d2027;white-space:nowrap;letter-spacing:-0.059px;">Please describe your experience</div><div class="t" style="position:absolute;left:85.50px;top:862.64px;font-size:31.50px;line-height:31.50px;font-weight:400;color:#1d2027;white-space:nowrap;">during your latest clinic visit.</div><div class="t" style="position:absolute;left:317.50px;top:958.96px;font-size:36.67px;line-height:36.67px;font-weight:400;color:#46a3d0;white-space:nowrap;letter-spacing:-0.043px;">00:26</div><svg style="position:absolute;left:0;top:0" width="700" height="1431" viewBox="0 0 700 1431"><g fill="#42a0cd"><rect x="90.42" y="1109.21" width="7.3" height="25.89" rx="3.65"/><rect x="99.94" y="1105.83" width="7.3" height="29.27" rx="3.65"/><rect x="109.46" y="1105.83" width="7.3" height="29.27" rx="3.65"/><rect x="118.98" y="1105.49" width="7.3" height="29.61" rx="3.65"/><rect x="128.50" y="1105.27" width="7.3" height="29.83" rx="3.65"/><rect x="138.02" y="1112.02" width="7.3" height="23.08" rx="3.65"/><rect x="147.54" y="1114.05" width="7.3" height="21.05" rx="3.65"/><rect x="157.06" y="1117.65" width="7.3" height="17.45" rx="3.65"/><rect x="166.58" y="1112.02" width="7.3" height="23.08" rx="3.65"/><rect x="176.10" y="1105.27" width="7.3" height="29.83" rx="3.65"/><rect x="185.62" y="1107.29" width="7.3" height="27.81" rx="3.65"/><rect x="195.14" y="1105.83" width="7.3" height="29.27" rx="3.65"/><rect x="204.66" y="1105.83" width="7.3" height="29.27" rx="3.65"/><rect x="214.18" y="1110.67" width="7.3" height="24.43" rx="3.65"/><rect x="223.70" y="1112.92" width="7.3" height="22.18" rx="3.65"/><rect x="233.22" y="1116.53" width="7.3" height="18.57" rx="3.65"/><rect x="242.74" y="1110.00" width="7.3" height="25.10" rx="3.65"/><rect x="252.26" y="1113.15" width="7.3" height="21.95" rx="3.65"/><rect x="261.78" y="1116.30" width="7.3" height="18.80" rx="3.65"/><rect x="271.30" y="1108.87" width="7.3" height="26.23" rx="3.65"/><rect x="280.82" y="1114.05" width="7.3" height="21.05" rx="3.65"/><rect x="290.34" y="1111.68" width="7.3" height="23.42" rx="3.65"/><rect x="299.86" y="1111.68" width="7.3" height="23.42" rx="3.65"/><rect x="309.38" y="1102.79" width="7.3" height="32.31" rx="3.65"/><rect x="318.90" y="1108.87" width="7.3" height="26.23" rx="3.65"/><rect x="328.42" y="1097.95" width="7.3" height="37.15" rx="3.65"/><rect x="337.94" y="1108.64" width="7.3" height="26.46" rx="3.65"/><rect x="347.46" y="1114.61" width="7.3" height="20.49" rx="3.65"/><rect x="356.98" y="1104.14" width="7.3" height="30.96" rx="3.65"/><rect x="366.50" y="1104.14" width="7.3" height="30.96" rx="3.65"/><rect x="376.02" y="1114.05" width="7.3" height="21.05" rx="3.65"/><rect x="385.54" y="1119.00" width="7.3" height="16.10" rx="3.65"/><rect x="395.06" y="1121.93" width="7.3" height="13.17" rx="3.65"/><rect x="404.58" y="1121.93" width="7.3" height="13.17" rx="3.65"/><rect x="414.10" y="1121.93" width="7.3" height="13.17" rx="3.65"/><rect x="423.62" y="1123.05" width="7.3" height="12.05" rx="3.65"/><rect x="433.14" y="1122.72" width="7.3" height="12.38" rx="3.65"/><rect x="442.66" y="1121.59" width="7.3" height="13.51" rx="3.65"/><rect x="452.18" y="1106.73" width="7.3" height="28.37" rx="3.65"/><rect x="461.70" y="1103.24" width="7.3" height="31.86" rx="3.65"/><rect x="471.22" y="1110.90" width="7.3" height="24.20" rx="3.65"/><rect x="480.74" y="1106.73" width="7.3" height="28.37" rx="3.65"/><rect x="490.26" y="1106.73" width="7.3" height="28.37" rx="3.65"/><rect x="499.78" y="1114.84" width="7.3" height="20.26" rx="3.65"/><rect x="509.30" y="1105.83" width="7.3" height="29.27" rx="3.65"/><rect x="518.82" y="1108.87" width="7.3" height="26.23" rx="3.65"/><rect x="528.34" y="1111.46" width="7.3" height="23.64" rx="3.65"/><rect x="537.86" y="1115.17" width="7.3" height="19.93" rx="3.65"/><rect x="547.38" y="1119.00" width="7.3" height="16.10" rx="3.65"/><rect x="556.90" y="1121.37" width="7.3" height="13.73" rx="3.65"/><rect x="566.42" y="1118.55" width="7.3" height="16.55" rx="3.65"/><rect x="575.94" y="1121.03" width="7.3" height="14.07" rx="3.65"/><rect x="585.46" y="1121.93" width="7.3" height="13.17" rx="3.65"/><rect x="594.98" y="1121.93" width="7.3" height="13.17" rx="3.65"/><rect x="604.50" y="1121.59" width="7.3" height="13.51" rx="3.65"/><rect x="614.02" y="1121.93" width="7.3" height="13.17" rx="3.65"/><rect x="623.54" y="1121.59" width="7.3" height="13.51" rx="3.65"/><rect x="633.06" y="1122.72" width="7.3" height="12.38" rx="3.65"/></g></svg></body></html>
